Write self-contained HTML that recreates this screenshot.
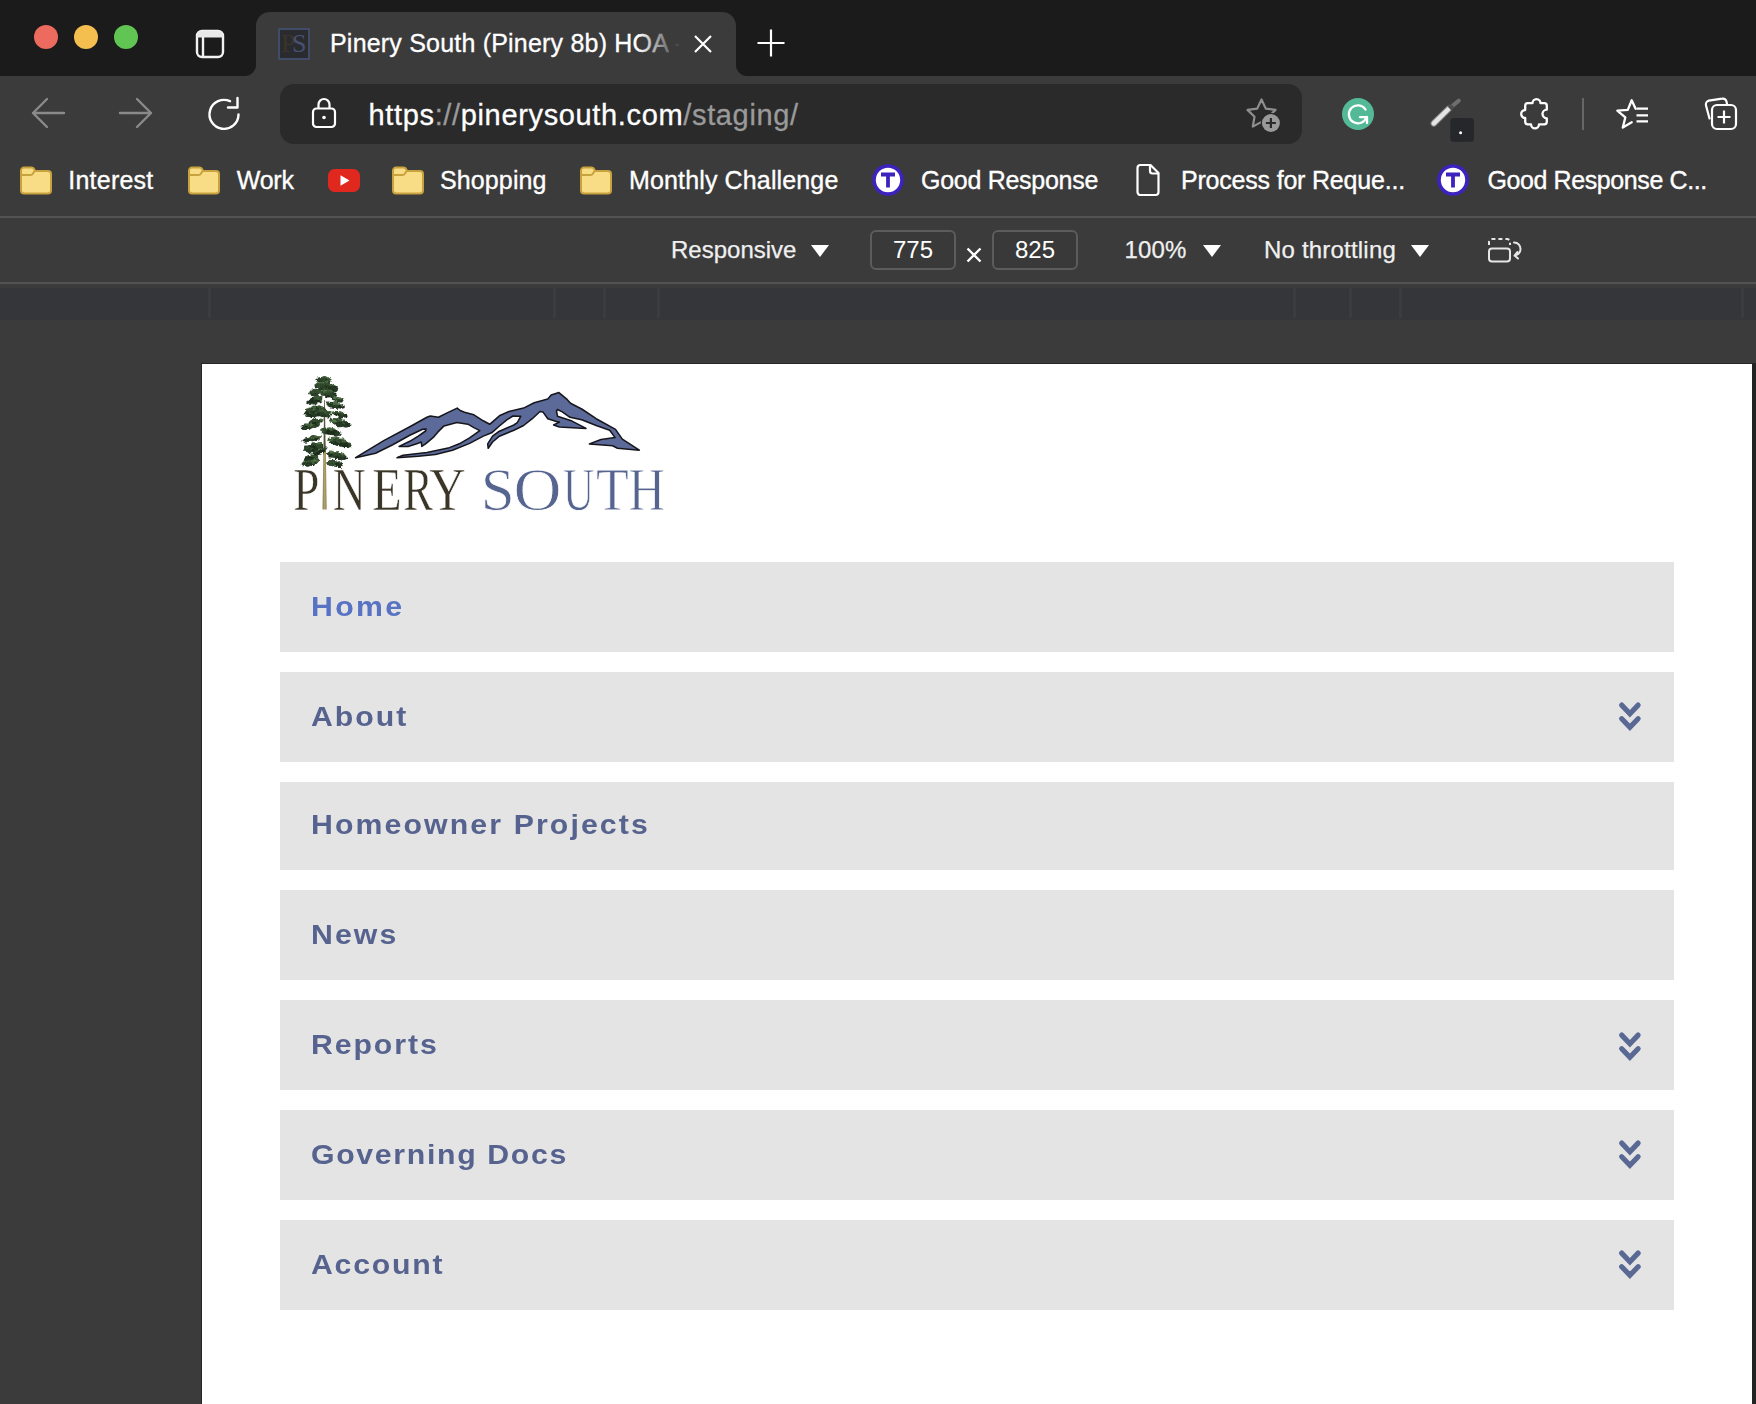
<!DOCTYPE html>
<html>
<head>
<meta charset="utf-8">
<title>Pinery South</title>
<style>
*{box-sizing:border-box;margin:0;padding:0}
html,body{width:1756px;height:1404px;overflow:hidden;background:#3b3b3b;font-family:"Liberation Sans",sans-serif;}
#root{position:relative;width:1756px;height:1404px;overflow:hidden;background:#3b3b3b;}
.abs{position:absolute}
.t{position:absolute;white-space:nowrap;line-height:1;color:#fff}
/* tab strip */
#tabstrip{left:0;top:0;width:1756px;height:76px;background:#1b1b1b}
#tab{left:256px;top:12px;width:481px;height:64px;background:#3b3b3b;border-radius:14px 14px 0 0}
.tl{position:absolute;width:24px;height:24px;border-radius:50%;top:25px}
/* toolbar */
#urlbar{left:280px;top:84px;width:1022px;height:60px;background:#2a2a2a;border-radius:14px}
/* lines */
.hl{position:absolute;left:0;width:1756px;height:2px;background:#525252}
#ruler{left:0;top:288px;width:1756px;height:32px;background:#34363a}
.tick{position:absolute;top:288px;width:3px;height:30px;background:#3b3c40}
/* page */
#page{left:202px;top:364px;width:1550px;height:1040px;background:#fff;box-shadow:0 0 0 1px #262626}
.mi{position:absolute;left:78px;width:1394px;height:90px;background:#e4e4e4}
.mi span{position:absolute;left:30.5px;top:30.8px;transform:scaleX(1.08);transform-origin:0 50%;font-weight:bold;font-size:28px;line-height:1;color:#57638f;letter-spacing:3px;white-space:nowrap}
.mi svg{position:absolute;left:1336.5px;top:29px}
.inp{position:absolute;top:230px;height:40px;border:2px solid #5c5c5c;border-radius:6px;background:#393939;color:#fff;font-size:24px;text-align:center;line-height:36px}
.tri{position:absolute;width:0;height:0;border-left:9px solid transparent;border-right:9px solid transparent;border-top:12px solid #fff;top:245px}
.bm{top:168px;font-size:25px;-webkit-text-stroke-width:0.35px}
#tabtitle,#url{-webkit-text-stroke-width:0.3px}
.dv{top:238px;font-size:24px;color:#f0f0f0;-webkit-text-stroke-width:0.25px}
</style>
</head>
<body>
<div id="root">
<!-- TABSTRIP -->
<div id="tabstrip" class="abs"></div>
<div class="tl" style="left:34px;background:#ed6a5e"></div>
<div class="tl" style="left:74px;background:#f5bf4f"></div>
<div class="tl" style="left:114px;background:#61c554"></div>

<!-- tab actions icon -->
<svg class="abs" style="left:194px;top:28px" width="32" height="32" viewBox="0 0 32 32"><rect x="3" y="3" width="26" height="26" rx="5" fill="none" stroke="#f2f2f2" stroke-width="2.4"/><path d="M3 9.5V8a5 5 0 0 1 5-5h16a5 5 0 0 1 5 5v1.5z" fill="#e8e8e8"/><path d="M9 9v20" stroke="#f2f2f2" stroke-width="2.4"/></svg>
<!-- tab shape -->
<svg class="abs" style="left:240px;top:12px" width="514" height="64" viewBox="0 0 514 64"><path d="M5 64 H507 C501 64 496 59 496 53 V14 C496 6 490 0 482 0 H30 C22 0 16 6 16 14 V53 C16 59 11 64 5 64Z" fill="#3b3b3b"/></svg>
<!-- favicon -->
<div class="abs" style="left:278px;top:28px;width:32px;height:32px;background:#2a2b2f;border:2px solid #414c69"></div>
<div class="t" style="left:281px;top:31px;font-family:'Liberation Serif',serif;font-size:26px;color:#3a352a;letter-spacing:-2px">P</div>
<div class="t" style="left:292px;top:31px;font-family:'Liberation Serif',serif;font-size:26px;color:#465170">S</div>
<div class="t" id="tabtitle" style="left:330px;top:31px;font-size:25px;letter-spacing:0.2px">Pinery South (Pinery 8b) HOA -</div>
<div class="abs" style="left:638px;top:20px;width:48px;height:48px;background:linear-gradient(90deg,rgba(59,59,59,0),#3b3b3b 88%)"></div>
<svg class="abs" style="left:692px;top:33px" width="22" height="22" viewBox="0 0 22 22"><path d="M3 3L19 19M19 3L3 19" stroke="#fff" stroke-width="2.2" fill="none"/></svg>
<svg class="abs" style="left:756px;top:28px" width="30" height="30" viewBox="0 0 30 30"><path d="M15 1.5V28.5M1.5 15H28.5" stroke="#fff" stroke-width="2.2" fill="none"/></svg>

<!-- TOOLBAR -->
<div id="urlbar" class="abs"></div>

<svg class="abs" style="left:30px;top:96px" width="36" height="34" viewBox="0 0 36 34"><path d="M17 3L3 17L17 31M3 17H34" stroke="#8a8a8a" stroke-width="2.4" fill="none" stroke-linecap="round" stroke-linejoin="round"/></svg>
<svg class="abs" style="left:118px;top:96px" width="36" height="34" viewBox="0 0 36 34"><path d="M19 3L33 17L19 31M33 17H2" stroke="#8a8a8a" stroke-width="2.4" fill="none" stroke-linecap="round" stroke-linejoin="round"/></svg>
<svg class="abs" style="left:206px;top:96px" width="36" height="36" viewBox="0 0 36 36"><path d="M32.5 18.5A14.5 14.5 0 1 1 24 5.2" stroke="#fff" stroke-width="2.4" fill="none" stroke-linecap="round"/><path d="M22 11.5H31.5V2" stroke="#fff" stroke-width="2.4" fill="none" stroke-linecap="round" stroke-linejoin="round"/></svg>
<!-- lock -->
<svg class="abs" style="left:310px;top:96px" width="28" height="34" viewBox="0 0 28 34"><rect x="3" y="12.5" width="22" height="18.5" rx="3.5" fill="none" stroke="#fff" stroke-width="2.2"/><path d="M8.5 12.5V8.5a5.5 5.5 0 0 1 11 0v4" fill="none" stroke="#fff" stroke-width="2.2"/><circle cx="14" cy="21.5" r="1.8" fill="#fff"/></svg>
<div class="t" id="url" style="left:368.5px;top:100.5px;font-size:29px;letter-spacing:0.65px"><span style="color:#fff">https</span><span style="color:#9a9a9a">://</span><span style="color:#fff">pinerysouth.com</span><span style="color:#9a9a9a">/staging/</span></div>
<!-- star plus -->
<svg class="abs" style="left:1244px;top:96px" width="40" height="38" viewBox="0 0 40 38"><path d="M17.5 3.5L21.8 12.6L31.5 13.9L24.5 20.8L26.2 30.6L17.5 25.9L8.8 30.6L10.5 20.8L3.5 13.9L13.2 12.6Z" fill="none" stroke="#8f8f8f" stroke-width="2.2" stroke-linejoin="round"/><circle cx="26.900" cy="27" r="10.300" fill="#2a2a2a"/><circle cx="26.900" cy="27" r="9" fill="#9a9a9a"/><path d="M26.900 22v10M21.900 27h10" stroke="#2a2a2a" stroke-width="2.200"/></svg>
<!-- grammarly -->
<div class="abs" style="left:1342px;top:98px;width:32px;height:32px;border-radius:50%;background:#54b996"></div>
<svg class="abs" style="left:1342px;top:98px" width="32" height="32" viewBox="0 0 32 32"><path d="M23.5 11.5A9 9 0 1 0 24.5 19" fill="none" stroke="#fff" stroke-width="2.300" stroke-linecap="round"/><path d="M18 19.2H25V25" fill="none" stroke="#fff" stroke-width="2.300" stroke-linecap="round" stroke-linejoin="round"/></svg>
<!-- pen -->
<svg class="abs" style="left:1430px;top:96px" width="48" height="48" viewBox="0 0 48 48"><path d="M17.500 14L28.800 4.600" stroke="#6e6e6e" stroke-width="4" stroke-linecap="round"/><path d="M3.800 27.400L18.500 13" stroke="#8a8a8a" stroke-width="6.400" stroke-linecap="round"/><path d="M3.800 27.400L18.500 13" stroke="#e4e4e4" stroke-width="4.400" stroke-linecap="round"/><path d="M19.500 12.500L22.500 9.500" stroke="#4d4d4d" stroke-width="5" /><rect x="20.300" y="22" width="23.700" height="23.700" rx="3.500" fill="#25272b"/><circle cx="30.600" cy="36.700" r="1.500" fill="#fff"/></svg>
<!-- puzzle -->
<svg class="abs" style="left:1516px;top:94px" width="40" height="40" viewBox="0 0 40 40"><path d="M11.700 9.200H16.500A4 4 0 0 1 24.500 9.200H28.300A2.500 2.500 0 0 1 30.800 11.700V15.700A4.300 4.300 0 0 0 30.800 24.300V27.800A2.500 2.500 0 0 1 28.300 30.300H23A4 4 0 0 1 15 30.300H11.700A2.500 2.500 0 0 1 9.200 27.800V24A3.900 3.900 0 0 1 9.200 16V11.700A2.500 2.500 0 0 1 11.700 9.200Z" fill="none" stroke="#fff" stroke-width="2.300" stroke-linejoin="round"/></svg>
<div class="abs" style="left:1582px;top:98px;width:2px;height:32px;background:#666"></div>
<!-- fav list -->
<svg class="abs" style="left:1612px;top:94px" width="40" height="40" viewBox="0 0 40 40"><path d="M19.700 28.300L10.800 33.600L13.300 23.400L5.300 16.700L15.800 15.900L19.700 6.200L23.600 14.700" fill="none" stroke="#fff" stroke-width="2.300" stroke-linejoin="round" stroke-linecap="round"/><path d="M24.500 14.700H36M24.500 21.300H36M24.500 27.300H36" stroke="#fff" stroke-width="2.300"/></svg>
<!-- collections -->
<svg class="abs" style="left:1702px;top:96px" width="38" height="36" viewBox="0 0 38 36"><path d="M7.500 22.500L4 9.500A4 4 0 0 1 6.800 4.600L20 2.700A4 4 0 0 1 24.500 5.500L25 8" fill="none" stroke="#fff" stroke-width="2.2" stroke-linecap="round"/><rect x="10" y="9" width="24" height="24" rx="5" fill="#3b3b3b" stroke="#fff" stroke-width="2.2"/><path d="M22 14.500v13M15.500 21h13" stroke="#fff" stroke-width="2.2"/></svg>
<!-- BOOKMARKS -->
<svg class="abs" style="left:19px;top:165px" width="34" height="30" viewBox="0 0 34 30"><path d="M2 5.500A3 3 0 0 1 5 2.500H12.500A3 3 0 0 1 15.200 4.200L16 6H29A3 3 0 0 1 32 9V25.500A3 3 0 0 1 29 28.500H5A3 3 0 0 1 2 25.500Z" fill="#f8dd86" stroke="#c8a23c" stroke-width="2"/><path d="M2.500 10H11.500A3 3 0 0 0 14.300 8L15.800 6" fill="none" stroke="#c8a23c" stroke-width="2"/></svg>
<div class="t bm" id="bm1" style="left:68.3px;letter-spacing:0.22px">Interest</div>
<svg class="abs" style="left:187px;top:165px" width="34" height="30" viewBox="0 0 34 30"><path d="M2 5.500A3 3 0 0 1 5 2.500H12.500A3 3 0 0 1 15.200 4.200L16 6H29A3 3 0 0 1 32 9V25.500A3 3 0 0 1 29 28.500H5A3 3 0 0 1 2 25.500Z" fill="#f8dd86" stroke="#c8a23c" stroke-width="2"/><path d="M2.500 10H11.500A3 3 0 0 0 14.300 8L15.800 6" fill="none" stroke="#c8a23c" stroke-width="2"/></svg>
<div class="t bm" id="bm2" style="left:236.8px;letter-spacing:-0.25px">Work</div>
<svg class="abs" style="left:328px;top:169px" width="32" height="23" viewBox="0 0 32 23"><rect x="0" y="0" width="32" height="23" rx="6.500" fill="#e0281e"/><path d="M12.500 6.200L21.500 11.500L12.500 16.800Z" fill="#fff"/></svg>
<svg class="abs" style="left:391px;top:165px" width="34" height="30" viewBox="0 0 34 30"><path d="M2 5.500A3 3 0 0 1 5 2.500H12.500A3 3 0 0 1 15.200 4.200L16 6H29A3 3 0 0 1 32 9V25.500A3 3 0 0 1 29 28.500H5A3 3 0 0 1 2 25.500Z" fill="#f8dd86" stroke="#c8a23c" stroke-width="2"/><path d="M2.500 10H11.500A3 3 0 0 0 14.300 8L15.800 6" fill="none" stroke="#c8a23c" stroke-width="2"/></svg>
<div class="t bm" id="bm3" style="left:440px;letter-spacing:0.12px">Shopping</div>
<svg class="abs" style="left:579px;top:165px" width="34" height="30" viewBox="0 0 34 30"><path d="M2 5.500A3 3 0 0 1 5 2.500H12.500A3 3 0 0 1 15.200 4.200L16 6H29A3 3 0 0 1 32 9V25.500A3 3 0 0 1 29 28.500H5A3 3 0 0 1 2 25.500Z" fill="#f8dd86" stroke="#c8a23c" stroke-width="2"/><path d="M2.500 10H11.500A3 3 0 0 0 14.300 8L15.800 6" fill="none" stroke="#c8a23c" stroke-width="2"/></svg>
<div class="t bm" id="bm4" style="left:629px;letter-spacing:0.14px">Monthly Challenge</div>
<svg class="abs" style="left:871px;top:163px" width="34" height="34" viewBox="0 0 34 34"><circle cx="17" cy="17" r="14" fill="#fff" stroke="#3d22c0" stroke-width="3.600"/><path d="M10 11.500H24M17 11.500V24.500" stroke="#3d22c0" stroke-width="3.800"/></svg>
<div class="t bm" id="bm5" style="left:921px;letter-spacing:-0.28px">Good Response</div>
<svg class="abs" style="left:1134px;top:162px" width="28" height="36" viewBox="0 0 28 36"><path d="M6.500 3H16.500L24.500 11V30A3 3 0 0 1 21.500 33H6.500A3 3 0 0 1 3.500 30V6A3 3 0 0 1 6.500 3Z" fill="none" stroke="#fff" stroke-width="2.2" stroke-linejoin="round"/><path d="M16 3.500V9A2.500 2.500 0 0 0 18.500 11.500H24" fill="none" stroke="#fff" stroke-width="2.2"/></svg>
<div class="t bm" id="bm6" style="left:1181px;letter-spacing:-0.2px">Process for Reque...</div>
<svg class="abs" style="left:1436px;top:163px" width="34" height="34" viewBox="0 0 34 34"><circle cx="17" cy="17" r="14" fill="#fff" stroke="#3d22c0" stroke-width="3.600"/><path d="M10 11.500H24M17 11.500V24.500" stroke="#3d22c0" stroke-width="3.800"/></svg>
<div class="t bm" id="bm7" style="left:1487.5px;letter-spacing:-0.4px">Good Response C...</div>

<!-- DEVTOOLS BAR -->
<div class="hl" style="top:216px"></div>
<div class="hl" style="top:282px"></div>

<div class="t dv" id="dv1" style="left:671px">Responsive</div>
<div class="tri" style="left:811px"></div>
<div class="inp" style="left:870px;width:86px">775</div>
<svg class="abs" style="left:965px;top:246px" width="18" height="18" viewBox="0 0 18 18"><path d="M2.500 2.500L15.500 15.500M15.500 2.500L2.500 15.500" stroke="#fff" stroke-width="2.400"/></svg>
<div class="inp" style="left:992px;width:86px">825</div>
<div class="t dv" id="dv2" style="left:1124.5px;letter-spacing:0.15px">100%</div>
<div class="tri" style="left:1203px"></div>
<div class="t dv" id="dv3" style="left:1264px;letter-spacing:0.2px">No throttling</div>
<div class="tri" style="left:1411px"></div>
<svg class="abs" style="left:1486px;top:236px" width="38" height="28" viewBox="0 0 38 28"><rect x="3" y="12.500" width="21" height="13" rx="3" fill="none" stroke="#e6e6e6" stroke-width="2"/><path d="M3 9V6A3 3 0 0 1 6 3H21A3 3 0 0 1 24 6V9" fill="none" stroke="#e6e6e6" stroke-width="2" stroke-dasharray="4 3"/><path d="M28 6.500C32.500 6.500 34.500 10 34.500 13C34.500 16.500 32 19 29 19.500M31.500 16L28.500 19.600L32 22.500" fill="none" stroke="#e6e6e6" stroke-width="2" stroke-linecap="round" stroke-linejoin="round"/></svg>
<div id="ruler" class="abs"></div><div class="tick" style="left:208px"></div><div class="tick" style="left:553px"></div><div class="tick" style="left:603px"></div><div class="tick" style="left:657px"></div><div class="tick" style="left:1293px"></div><div class="tick" style="left:1349px"></div><div class="tick" style="left:1399px"></div><div class="tick" style="left:1741px"></div>
<!-- PAGE -->
<div id="page" class="abs">
  <div class="mi" style="top:198px"><span style="color:#5872c4;letter-spacing:2.2px">Home</span></div>
  <div class="mi" style="top:308px"><span style="letter-spacing:1.85px">About</span><svg width="26" height="32" viewBox="0 0 26 32"><path d="M4.700 4.100L12.900 12.700L21.100 4.100M4.700 17.700L12.900 26.300L21.100 17.700" fill="none" stroke="#5a6894" stroke-width="5.200" stroke-linecap="round" stroke-linejoin="miter"/></svg></div>
  <div class="mi" style="top:418px;height:88px"><span style="letter-spacing:1.96px;top:29px">Homeowner Projects</span></div>
  <div class="mi" style="top:526px"><span style="letter-spacing:1.95px">News</span></div>
  <div class="mi" style="top:636px"><span style="letter-spacing:1.77px">Reports</span><svg style="top:31px" width="26" height="32" viewBox="0 0 26 32"><path d="M4.700 4.100L12.900 12.700L21.100 4.100M4.700 17.700L12.900 26.300L21.100 17.700" fill="none" stroke="#5a6894" stroke-width="5.200" stroke-linecap="round" stroke-linejoin="miter"/></svg></div>
  <div class="mi" style="top:746px"><span style="letter-spacing:1.55px">Governing Docs</span><svg width="26" height="32" viewBox="0 0 26 32"><path d="M4.700 4.100L12.900 12.700L21.100 4.100M4.700 17.700L12.900 26.300L21.100 17.700" fill="none" stroke="#5a6894" stroke-width="5.200" stroke-linecap="round" stroke-linejoin="miter"/></svg></div>
  <div class="mi" style="top:856px"><span style="letter-spacing:1.62px">Account</span><svg width="26" height="32" viewBox="0 0 26 32"><path d="M4.700 4.100L12.900 12.700L21.100 4.100M4.700 17.700L12.900 26.300L21.100 17.700" fill="none" stroke="#5a6894" stroke-width="5.200" stroke-linecap="round" stroke-linejoin="miter"/></svg></div>
</div>
<div id="rstrip" class="abs" style="left:1752px;top:363px;width:4px;height:1041px;background:#232323"></div>
<!-- LOGO -->
<svg class="abs" style="left:280px;top:366px" width="400" height="160" viewBox="280 366 400 160">
<defs>
<filter id="rough" x="-10%" y="-10%" width="120%" height="120%"><feTurbulence type="fractalNoise" baseFrequency="0.35" numOctaves="2" seed="3" result="n"/><feDisplacementMap in="SourceGraphic" in2="n" scale="3.2" xChannelSelector="R" yChannelSelector="G"/><feGaussianBlur stdDeviation="0.35"/></filter>
<linearGradient id="trunk" x1="0" x2="1" y1="0" y2="0"><stop offset="0" stop-color="#6d643c"/><stop offset="0.35" stop-color="#b3a56c"/><stop offset="0.75" stop-color="#a3955c"/><stop offset="1" stop-color="#7d7144"/></linearGradient>
</defs>
<!-- trunk -->
<path d="M324.2 400 L323.6 440 L323.2 455 L326 455 L325.5 440 L324.9 400Z" fill="#55553c"/>
<path d="M323.3 452 L322.6 509.6 L326.6 509.6 L325.9 452Z" fill="url(#trunk)"/>
<g filter="url(#rough)">
<ellipse cx="324.0" cy="380.2" rx="7.0" ry="3.4" fill="#2b4229" transform="rotate(0 324.0 380.2)"/>
<ellipse cx="328.2" cy="379.5" rx="1.2" ry="0.7" fill="#1c2b1b"/>
<ellipse cx="319.9" cy="379.8" rx="1.3" ry="0.7" fill="#263a25"/>
<ellipse cx="324.5" cy="381.3" rx="1.8" ry="1.0" fill="#3a5534"/>
<ellipse cx="327.8" cy="381.5" rx="2.4" ry="1.4" fill="#344d2f"/>
<ellipse cx="329.3" cy="379.3" rx="2.0" ry="1.2" fill="#344d2f"/>
<ellipse cx="320.1" cy="379.2" rx="2.6" ry="1.5" fill="#344d2f"/>
<ellipse cx="321.6" cy="379.8" rx="1.8" ry="1.0" fill="#263a25"/>
<ellipse cx="326.9" cy="381.6" rx="2.3" ry="1.3" fill="#263a25"/>
<ellipse cx="328.2" cy="381.9" rx="1.4" ry="0.8" fill="#20321f"/>
<ellipse cx="322.3" cy="380.0" rx="1.3" ry="0.7" fill="#3a5534"/>
<ellipse cx="318.9" cy="380.3" rx="2.3" ry="1.3" fill="#20321f"/>
<ellipse cx="320.0" cy="379.0" rx="1.6" ry="0.9" fill="#57754c"/>
<ellipse cx="322.9" cy="378.6" rx="2.0" ry="1.1" fill="#3a5534"/>
<ellipse cx="319.9" cy="380.3" rx="1.8" ry="1.0" fill="#263a25"/>
<ellipse cx="326.4" cy="380.1" rx="1.8" ry="1.0" fill="#1c2b1b"/>
<ellipse cx="320.3" cy="383.2" rx="1.8" ry="1.0" fill="#20321f"/>
<ellipse cx="324.5" cy="377.5" rx="2.4" ry="1.4" fill="#45623c"/>
<ellipse cx="321.8" cy="382.1" rx="1.9" ry="1.1" fill="#1c2b1b"/>
<ellipse cx="325.9" cy="380.7" rx="1.6" ry="0.9" fill="#2b4229"/>
<ellipse cx="323.1" cy="379.5" rx="2.2" ry="1.3" fill="#2b4229"/>
<ellipse cx="318.9" cy="378.8" rx="1.8" ry="1.0" fill="#2f472b"/>
<ellipse cx="319.7" cy="382.2" rx="1.2" ry="0.7" fill="#1c2b1b"/>
<ellipse cx="320.6" cy="382.5" rx="1.9" ry="1.1" fill="#263a25"/>
<ellipse cx="324.3" cy="379.0" rx="1.5" ry="0.9" fill="#344d2f"/>
<ellipse cx="328.3" cy="379.0" rx="1.4" ry="0.8" fill="#344d2f"/>
<ellipse cx="317.7" cy="379.2" rx="2.3" ry="1.4" fill="#1c2b1b"/>
<ellipse cx="318.4" cy="379.3" rx="2.6" ry="1.5" fill="#2b4229"/>
<ellipse cx="329.1" cy="377.9" rx="1.4" ry="0.8" fill="#57754c"/>
<ellipse cx="327.3" cy="382.6" rx="1.2" ry="0.7" fill="#263a25"/>
<ellipse cx="324.0" cy="380.5" rx="1.8" ry="1.0" fill="#2f472b"/>
<ellipse cx="325.0" cy="386.0" rx="6.0" ry="4.8" fill="#2b4229" transform="rotate(0 325.0 386.0)"/>
<ellipse cx="329.8" cy="384.8" rx="1.9" ry="1.1" fill="#263a25"/>
<ellipse cx="322.1" cy="382.4" rx="1.8" ry="1.1" fill="#2f472b"/>
<ellipse cx="326.1" cy="382.9" rx="1.7" ry="1.0" fill="#4c6a42"/>
<ellipse cx="321.2" cy="386.4" rx="1.4" ry="0.8" fill="#3a5534"/>
<ellipse cx="323.1" cy="386.6" rx="2.0" ry="1.2" fill="#344d2f"/>
<ellipse cx="327.3" cy="386.0" rx="1.3" ry="0.8" fill="#2f472b"/>
<ellipse cx="323.8" cy="385.1" rx="1.5" ry="0.8" fill="#20321f"/>
<ellipse cx="326.8" cy="388.1" rx="1.7" ry="1.0" fill="#2b4229"/>
<ellipse cx="323.0" cy="386.3" rx="1.9" ry="1.1" fill="#20321f"/>
<ellipse cx="321.7" cy="386.3" rx="1.4" ry="0.8" fill="#2b4229"/>
<ellipse cx="323.3" cy="388.2" rx="2.4" ry="1.4" fill="#263a25"/>
<ellipse cx="322.3" cy="385.8" rx="2.5" ry="1.5" fill="#2f472b"/>
<ellipse cx="327.7" cy="389.0" rx="1.2" ry="0.7" fill="#2b4229"/>
<ellipse cx="330.5" cy="385.4" rx="2.2" ry="1.2" fill="#2f472b"/>
<ellipse cx="319.3" cy="385.4" rx="1.7" ry="1.0" fill="#3a5534"/>
<ellipse cx="319.8" cy="385.1" rx="1.6" ry="0.9" fill="#3a5534"/>
<ellipse cx="321.0" cy="383.0" rx="2.3" ry="1.3" fill="#57754c"/>
<ellipse cx="326.9" cy="381.7" rx="2.2" ry="1.3" fill="#57754c"/>
<ellipse cx="326.3" cy="389.4" rx="2.2" ry="1.3" fill="#20321f"/>
<ellipse cx="326.0" cy="382.6" rx="1.4" ry="0.8" fill="#3a5534"/>
<ellipse cx="328.9" cy="385.1" rx="2.5" ry="1.4" fill="#2f472b"/>
<ellipse cx="328.5" cy="385.1" rx="1.5" ry="0.9" fill="#3a5534"/>
<ellipse cx="321.6" cy="386.6" rx="1.9" ry="1.1" fill="#263a25"/>
<ellipse cx="327.2" cy="383.0" rx="2.1" ry="1.2" fill="#2f472b"/>
<ellipse cx="329.2" cy="388.1" rx="2.5" ry="1.4" fill="#263a25"/>
<ellipse cx="322.5" cy="386.3" rx="2.3" ry="1.3" fill="#2f472b"/>
<ellipse cx="330.0" cy="388.6" rx="2.2" ry="1.3" fill="#1c2b1b"/>
<ellipse cx="320.2" cy="388.9" rx="2.2" ry="1.3" fill="#263a25"/>
<ellipse cx="326.0" cy="386.0" rx="2.0" ry="1.2" fill="#20321f"/>
<ellipse cx="325.8" cy="384.2" rx="2.4" ry="1.4" fill="#344d2f"/>
<ellipse cx="323.0" cy="383.5" rx="2.0" ry="1.1" fill="#57754c"/>
<ellipse cx="330.3" cy="386.6" rx="2.2" ry="1.3" fill="#344d2f"/>
<ellipse cx="319.3" cy="385.2" rx="1.8" ry="1.0" fill="#1c2b1b"/>
<ellipse cx="326.9" cy="390.5" rx="1.2" ry="0.7" fill="#263a25"/>
<ellipse cx="324.2" cy="388.4" rx="2.0" ry="1.2" fill="#2b4229"/>
<ellipse cx="319.7" cy="384.7" rx="1.3" ry="0.7" fill="#2b4229"/>
<ellipse cx="318.7" cy="385.5" rx="3.7" ry="2.2" fill="#2b4229" transform="rotate(-14 318.7 385.5)"/>
<ellipse cx="320.8" cy="383.8" rx="2.3" ry="1.3" fill="#3a5534"/>
<ellipse cx="315.9" cy="387.3" rx="1.9" ry="1.1" fill="#263a25"/>
<ellipse cx="318.2" cy="385.6" rx="1.8" ry="1.0" fill="#3a5534"/>
<ellipse cx="315.9" cy="384.9" rx="1.4" ry="0.8" fill="#3a5534"/>
<ellipse cx="315.8" cy="386.6" rx="2.0" ry="1.1" fill="#2b4229"/>
<ellipse cx="317.3" cy="384.3" rx="1.9" ry="1.1" fill="#4c6a42"/>
<ellipse cx="319.2" cy="385.0" rx="1.4" ry="0.8" fill="#344d2f"/>
<ellipse cx="318.7" cy="383.8" rx="2.0" ry="1.1" fill="#4c6a42"/>
<ellipse cx="316.2" cy="386.8" rx="1.9" ry="1.1" fill="#263a25"/>
<ellipse cx="317.5" cy="384.3" rx="1.9" ry="1.1" fill="#344d2f"/>
<ellipse cx="316.9" cy="385.9" rx="1.9" ry="1.1" fill="#2f472b"/>
<ellipse cx="321.5" cy="383.8" rx="1.5" ry="0.8" fill="#344d2f"/>
<ellipse cx="332.5" cy="387.6" rx="4.8" ry="3.0" fill="#263a25" transform="rotate(14 332.5 387.6)"/>
<ellipse cx="329.8" cy="388.0" rx="1.6" ry="0.9" fill="#2b4229"/>
<ellipse cx="332.4" cy="388.5" rx="2.1" ry="1.2" fill="#1c2b1b"/>
<ellipse cx="335.1" cy="390.3" rx="2.5" ry="1.5" fill="#2b4229"/>
<ellipse cx="334.7" cy="390.6" rx="2.6" ry="1.5" fill="#263a25"/>
<ellipse cx="332.8" cy="386.7" rx="2.4" ry="1.4" fill="#57754c"/>
<ellipse cx="336.9" cy="388.5" rx="1.4" ry="0.8" fill="#20321f"/>
<ellipse cx="335.6" cy="388.3" rx="1.8" ry="1.0" fill="#2f472b"/>
<ellipse cx="330.3" cy="389.6" rx="1.2" ry="0.7" fill="#1c2b1b"/>
<ellipse cx="331.9" cy="387.7" rx="1.6" ry="0.9" fill="#263a25"/>
<ellipse cx="330.5" cy="390.2" rx="1.3" ry="0.8" fill="#263a25"/>
<ellipse cx="334.1" cy="387.8" rx="1.5" ry="0.9" fill="#344d2f"/>
<ellipse cx="334.4" cy="387.3" rx="2.3" ry="1.3" fill="#1c2b1b"/>
<ellipse cx="328.2" cy="388.0" rx="2.3" ry="1.4" fill="#2f472b"/>
<ellipse cx="329.4" cy="388.2" rx="1.9" ry="1.1" fill="#20321f"/>
<ellipse cx="332.3" cy="386.7" rx="1.3" ry="0.7" fill="#2f472b"/>
<ellipse cx="333.7" cy="390.8" rx="1.6" ry="0.9" fill="#20321f"/>
<ellipse cx="330.3" cy="384.9" rx="1.3" ry="0.7" fill="#57754c"/>
<ellipse cx="336.3" cy="389.8" rx="1.8" ry="1.0" fill="#2b4229"/>
<ellipse cx="335.6" cy="388.3" rx="2.5" ry="1.4" fill="#263a25"/>
<ellipse cx="334.5" cy="389.9" rx="1.5" ry="0.9" fill="#20321f"/>
<ellipse cx="315.6" cy="392.1" rx="5.7" ry="2.8" fill="#263a25" transform="rotate(-14 315.6 392.1)"/>
<ellipse cx="315.8" cy="393.4" rx="2.5" ry="1.4" fill="#2b4229"/>
<ellipse cx="313.1" cy="392.5" rx="1.8" ry="1.0" fill="#2b4229"/>
<ellipse cx="317.4" cy="393.3" rx="1.2" ry="0.7" fill="#2b4229"/>
<ellipse cx="316.4" cy="392.1" rx="1.9" ry="1.1" fill="#3a5534"/>
<ellipse cx="312.9" cy="392.7" rx="1.8" ry="1.0" fill="#2b4229"/>
<ellipse cx="316.7" cy="390.1" rx="1.9" ry="1.1" fill="#344d2f"/>
<ellipse cx="318.6" cy="391.1" rx="1.5" ry="0.9" fill="#57754c"/>
<ellipse cx="313.4" cy="395.0" rx="2.2" ry="1.3" fill="#263a25"/>
<ellipse cx="313.2" cy="393.8" rx="1.2" ry="0.7" fill="#263a25"/>
<ellipse cx="320.0" cy="391.3" rx="2.4" ry="1.4" fill="#344d2f"/>
<ellipse cx="316.7" cy="392.7" rx="2.4" ry="1.4" fill="#1c2b1b"/>
<ellipse cx="310.2" cy="393.4" rx="2.0" ry="1.2" fill="#2b4229"/>
<ellipse cx="318.0" cy="391.9" rx="1.6" ry="0.9" fill="#344d2f"/>
<ellipse cx="315.9" cy="395.0" rx="2.6" ry="1.5" fill="#2b4229"/>
<ellipse cx="316.5" cy="394.9" rx="1.6" ry="0.9" fill="#2b4229"/>
<ellipse cx="317.3" cy="393.3" rx="1.3" ry="0.7" fill="#2b4229"/>
<ellipse cx="313.2" cy="392.7" rx="1.9" ry="1.1" fill="#344d2f"/>
<ellipse cx="320.2" cy="392.5" rx="1.4" ry="0.8" fill="#263a25"/>
<ellipse cx="316.5" cy="392.1" rx="1.6" ry="0.9" fill="#3a5534"/>
<ellipse cx="320.6" cy="392.4" rx="2.4" ry="1.4" fill="#3a5534"/>
<ellipse cx="312.6" cy="390.8" rx="2.4" ry="1.4" fill="#344d2f"/>
<ellipse cx="328.8" cy="393.8" rx="7.5" ry="3.2" fill="#2b4229" transform="rotate(14 328.8 393.8)"/>
<ellipse cx="328.4" cy="391.3" rx="1.6" ry="0.9" fill="#3a5534"/>
<ellipse cx="328.0" cy="393.0" rx="2.4" ry="1.4" fill="#263a25"/>
<ellipse cx="325.0" cy="390.7" rx="2.3" ry="1.3" fill="#57754c"/>
<ellipse cx="334.5" cy="393.6" rx="2.0" ry="1.1" fill="#1c2b1b"/>
<ellipse cx="331.7" cy="391.5" rx="2.0" ry="1.2" fill="#2f472b"/>
<ellipse cx="326.9" cy="390.7" rx="1.5" ry="0.9" fill="#4c6a42"/>
<ellipse cx="334.2" cy="395.9" rx="2.5" ry="1.5" fill="#1c2b1b"/>
<ellipse cx="332.1" cy="392.4" rx="2.1" ry="1.2" fill="#2f472b"/>
<ellipse cx="325.4" cy="392.6" rx="1.5" ry="0.9" fill="#344d2f"/>
<ellipse cx="331.3" cy="391.5" rx="1.9" ry="1.1" fill="#3a5534"/>
<ellipse cx="332.9" cy="396.2" rx="2.2" ry="1.3" fill="#1c2b1b"/>
<ellipse cx="328.5" cy="394.7" rx="1.5" ry="0.9" fill="#2b4229"/>
<ellipse cx="329.3" cy="392.3" rx="2.1" ry="1.2" fill="#344d2f"/>
<ellipse cx="324.3" cy="392.8" rx="1.9" ry="1.1" fill="#2f472b"/>
<ellipse cx="328.3" cy="394.4" rx="2.1" ry="1.2" fill="#3a5534"/>
<ellipse cx="331.1" cy="395.0" rx="1.5" ry="0.9" fill="#2b4229"/>
<ellipse cx="327.1" cy="392.5" rx="1.9" ry="1.1" fill="#344d2f"/>
<ellipse cx="327.4" cy="396.3" rx="2.2" ry="1.2" fill="#1c2b1b"/>
<ellipse cx="326.9" cy="395.8" rx="1.8" ry="1.1" fill="#1c2b1b"/>
<ellipse cx="330.4" cy="390.7" rx="2.0" ry="1.1" fill="#45623c"/>
<ellipse cx="335.9" cy="395.1" rx="1.2" ry="0.7" fill="#1c2b1b"/>
<ellipse cx="333.1" cy="396.0" rx="2.6" ry="1.5" fill="#2b4229"/>
<ellipse cx="323.0" cy="394.5" rx="2.5" ry="1.4" fill="#344d2f"/>
<ellipse cx="326.6" cy="392.6" rx="1.9" ry="1.1" fill="#45623c"/>
<ellipse cx="332.7" cy="397.1" rx="1.9" ry="1.1" fill="#20321f"/>
<ellipse cx="328.2" cy="392.0" rx="2.5" ry="1.4" fill="#344d2f"/>
<ellipse cx="326.3" cy="394.0" rx="2.5" ry="1.5" fill="#2b4229"/>
<ellipse cx="324.9" cy="393.4" rx="1.4" ry="0.8" fill="#2f472b"/>
<ellipse cx="326.8" cy="394.2" rx="1.6" ry="0.9" fill="#2f472b"/>
<ellipse cx="329.6" cy="390.8" rx="1.3" ry="0.8" fill="#57754c"/>
<ellipse cx="328.0" cy="390.4" rx="1.6" ry="0.9" fill="#45623c"/>
<ellipse cx="314.9" cy="400.2" rx="7.5" ry="3.2" fill="#20321f" transform="rotate(-14 314.9 400.2)"/>
<ellipse cx="309.7" cy="403.7" rx="2.0" ry="1.2" fill="#2b4229"/>
<ellipse cx="320.2" cy="397.5" rx="2.4" ry="1.4" fill="#45623c"/>
<ellipse cx="320.7" cy="400.7" rx="1.6" ry="0.9" fill="#3a5534"/>
<ellipse cx="315.3" cy="401.9" rx="1.9" ry="1.1" fill="#263a25"/>
<ellipse cx="315.1" cy="397.1" rx="1.8" ry="1.0" fill="#4c6a42"/>
<ellipse cx="316.5" cy="397.2" rx="2.5" ry="1.4" fill="#3a5534"/>
<ellipse cx="308.8" cy="400.8" rx="1.2" ry="0.7" fill="#2b4229"/>
<ellipse cx="310.4" cy="402.8" rx="1.4" ry="0.8" fill="#2b4229"/>
<ellipse cx="308.1" cy="402.2" rx="2.0" ry="1.1" fill="#263a25"/>
<ellipse cx="310.8" cy="401.6" rx="1.6" ry="0.9" fill="#2b4229"/>
<ellipse cx="312.2" cy="401.8" rx="1.9" ry="1.1" fill="#1c2b1b"/>
<ellipse cx="319.6" cy="400.9" rx="1.3" ry="0.7" fill="#263a25"/>
<ellipse cx="318.8" cy="397.8" rx="1.5" ry="0.9" fill="#45623c"/>
<ellipse cx="319.8" cy="398.9" rx="1.4" ry="0.8" fill="#57754c"/>
<ellipse cx="315.4" cy="401.5" rx="2.0" ry="1.1" fill="#2b4229"/>
<ellipse cx="315.6" cy="401.8" rx="2.0" ry="1.1" fill="#20321f"/>
<ellipse cx="314.4" cy="398.1" rx="1.8" ry="1.0" fill="#3a5534"/>
<ellipse cx="316.3" cy="401.6" rx="2.2" ry="1.3" fill="#1c2b1b"/>
<ellipse cx="314.5" cy="403.7" rx="1.3" ry="0.8" fill="#263a25"/>
<ellipse cx="321.1" cy="400.5" rx="1.7" ry="1.0" fill="#2b4229"/>
<ellipse cx="308.5" cy="402.9" rx="2.4" ry="1.4" fill="#20321f"/>
<ellipse cx="318.6" cy="400.9" rx="2.3" ry="1.3" fill="#1c2b1b"/>
<ellipse cx="309.5" cy="402.0" rx="1.2" ry="0.7" fill="#1c2b1b"/>
<ellipse cx="320.9" cy="397.3" rx="1.9" ry="1.1" fill="#344d2f"/>
<ellipse cx="318.4" cy="399.0" rx="1.3" ry="0.8" fill="#57754c"/>
<ellipse cx="319.7" cy="401.8" rx="1.3" ry="0.8" fill="#1c2b1b"/>
<ellipse cx="320.8" cy="400.3" rx="1.2" ry="0.7" fill="#3a5534"/>
<ellipse cx="316.4" cy="403.2" rx="2.1" ry="1.2" fill="#2b4229"/>
<ellipse cx="320.3" cy="398.2" rx="1.9" ry="1.1" fill="#344d2f"/>
<ellipse cx="313.9" cy="399.3" rx="1.3" ry="0.7" fill="#263a25"/>
<ellipse cx="317.8" cy="399.0" rx="1.5" ry="0.9" fill="#3a5534"/>
<ellipse cx="337.6" cy="399.6" rx="5.6" ry="1.9" fill="#20321f" transform="rotate(14 337.6 399.6)"/>
<ellipse cx="340.6" cy="400.4" rx="1.8" ry="1.1" fill="#2b4229"/>
<ellipse cx="334.8" cy="397.3" rx="1.8" ry="1.1" fill="#57754c"/>
<ellipse cx="336.7" cy="399.3" rx="1.8" ry="1.0" fill="#2b4229"/>
<ellipse cx="337.2" cy="399.8" rx="1.9" ry="1.1" fill="#2b4229"/>
<ellipse cx="336.8" cy="398.9" rx="1.5" ry="0.9" fill="#344d2f"/>
<ellipse cx="340.0" cy="399.7" rx="1.2" ry="0.7" fill="#2f472b"/>
<ellipse cx="337.2" cy="398.3" rx="1.7" ry="1.0" fill="#4c6a42"/>
<ellipse cx="339.4" cy="398.3" rx="1.9" ry="1.1" fill="#57754c"/>
<ellipse cx="335.2" cy="399.0" rx="2.3" ry="1.3" fill="#3a5534"/>
<ellipse cx="337.7" cy="400.6" rx="2.3" ry="1.3" fill="#2b4229"/>
<ellipse cx="340.7" cy="401.4" rx="2.0" ry="1.2" fill="#263a25"/>
<ellipse cx="332.4" cy="398.5" rx="1.3" ry="0.7" fill="#3a5534"/>
<ellipse cx="339.4" cy="401.1" rx="1.5" ry="0.9" fill="#263a25"/>
<ellipse cx="333.4" cy="399.5" rx="1.4" ry="0.8" fill="#20321f"/>
<ellipse cx="342.0" cy="399.5" rx="2.2" ry="1.3" fill="#344d2f"/>
<ellipse cx="340.6" cy="399.8" rx="1.4" ry="0.8" fill="#263a25"/>
<ellipse cx="334.7" cy="405.2" rx="9.1" ry="2.6" fill="#1c2b1b" transform="rotate(14 334.7 405.2)"/>
<ellipse cx="341.6" cy="407.4" rx="1.7" ry="1.0" fill="#2b4229"/>
<ellipse cx="340.6" cy="406.5" rx="1.3" ry="0.8" fill="#20321f"/>
<ellipse cx="333.3" cy="406.6" rx="2.5" ry="1.5" fill="#20321f"/>
<ellipse cx="327.8" cy="402.6" rx="1.7" ry="1.0" fill="#45623c"/>
<ellipse cx="337.6" cy="404.3" rx="1.2" ry="0.7" fill="#344d2f"/>
<ellipse cx="336.4" cy="407.7" rx="1.8" ry="1.0" fill="#2b4229"/>
<ellipse cx="328.7" cy="405.8" rx="1.2" ry="0.7" fill="#20321f"/>
<ellipse cx="334.3" cy="407.4" rx="1.7" ry="1.0" fill="#1c2b1b"/>
<ellipse cx="336.8" cy="405.9" rx="2.5" ry="1.4" fill="#2f472b"/>
<ellipse cx="335.3" cy="406.1" rx="2.0" ry="1.2" fill="#2f472b"/>
<ellipse cx="332.8" cy="407.5" rx="2.1" ry="1.2" fill="#2b4229"/>
<ellipse cx="335.1" cy="403.0" rx="2.5" ry="1.4" fill="#45623c"/>
<ellipse cx="342.4" cy="407.2" rx="2.5" ry="1.4" fill="#20321f"/>
<ellipse cx="338.9" cy="406.5" rx="1.8" ry="1.1" fill="#1c2b1b"/>
<ellipse cx="340.1" cy="406.1" rx="1.5" ry="0.9" fill="#20321f"/>
<ellipse cx="336.2" cy="404.7" rx="1.9" ry="1.1" fill="#344d2f"/>
<ellipse cx="337.7" cy="403.7" rx="2.3" ry="1.4" fill="#57754c"/>
<ellipse cx="331.0" cy="403.3" rx="1.6" ry="0.9" fill="#45623c"/>
<ellipse cx="336.6" cy="403.6" rx="1.9" ry="1.1" fill="#344d2f"/>
<ellipse cx="335.1" cy="403.9" rx="1.3" ry="0.7" fill="#4c6a42"/>
<ellipse cx="328.2" cy="403.9" rx="1.4" ry="0.8" fill="#344d2f"/>
<ellipse cx="341.7" cy="405.1" rx="1.5" ry="0.9" fill="#344d2f"/>
<ellipse cx="335.8" cy="407.3" rx="2.6" ry="1.5" fill="#1c2b1b"/>
<ellipse cx="336.0" cy="406.5" rx="1.8" ry="1.1" fill="#263a25"/>
<ellipse cx="335.2" cy="402.8" rx="2.1" ry="1.2" fill="#4c6a42"/>
<ellipse cx="335.9" cy="404.0" rx="1.6" ry="0.9" fill="#45623c"/>
<ellipse cx="329.0" cy="405.6" rx="1.5" ry="0.8" fill="#3a5534"/>
<ellipse cx="336.1" cy="406.9" rx="1.6" ry="0.9" fill="#263a25"/>
<ellipse cx="331.8" cy="406.1" rx="2.6" ry="1.5" fill="#263a25"/>
<ellipse cx="327.8" cy="403.1" rx="1.3" ry="0.8" fill="#344d2f"/>
<ellipse cx="314.9" cy="411.7" rx="10.7" ry="5.1" fill="#20321f" transform="rotate(-14 314.9 411.7)"/>
<ellipse cx="321.2" cy="412.5" rx="2.3" ry="1.4" fill="#1c2b1b"/>
<ellipse cx="309.1" cy="414.2" rx="2.4" ry="1.4" fill="#263a25"/>
<ellipse cx="318.6" cy="412.4" rx="2.6" ry="1.5" fill="#263a25"/>
<ellipse cx="316.2" cy="412.8" rx="1.9" ry="1.1" fill="#3a5534"/>
<ellipse cx="310.1" cy="413.8" rx="2.3" ry="1.3" fill="#20321f"/>
<ellipse cx="321.8" cy="412.6" rx="2.1" ry="1.2" fill="#3a5534"/>
<ellipse cx="321.0" cy="410.9" rx="1.2" ry="0.7" fill="#2f472b"/>
<ellipse cx="323.8" cy="410.6" rx="2.5" ry="1.4" fill="#1c2b1b"/>
<ellipse cx="320.9" cy="410.4" rx="2.1" ry="1.2" fill="#3a5534"/>
<ellipse cx="312.5" cy="411.2" rx="1.2" ry="0.7" fill="#20321f"/>
<ellipse cx="312.3" cy="411.9" rx="1.3" ry="0.8" fill="#20321f"/>
<ellipse cx="312.4" cy="410.4" rx="1.9" ry="1.1" fill="#2b4229"/>
<ellipse cx="320.3" cy="414.4" rx="1.8" ry="1.0" fill="#2b4229"/>
<ellipse cx="310.8" cy="409.6" rx="1.2" ry="0.7" fill="#2f472b"/>
<ellipse cx="308.9" cy="411.8" rx="1.8" ry="1.0" fill="#1c2b1b"/>
<ellipse cx="314.7" cy="406.8" rx="2.1" ry="1.2" fill="#344d2f"/>
<ellipse cx="313.7" cy="409.5" rx="1.2" ry="0.7" fill="#57754c"/>
<ellipse cx="307.1" cy="416.0" rx="1.8" ry="1.0" fill="#2b4229"/>
<ellipse cx="311.0" cy="413.2" rx="1.2" ry="0.7" fill="#263a25"/>
<ellipse cx="321.7" cy="413.9" rx="1.7" ry="1.0" fill="#2b4229"/>
<ellipse cx="314.0" cy="409.6" rx="1.7" ry="1.0" fill="#57754c"/>
<ellipse cx="304.8" cy="413.5" rx="1.3" ry="0.8" fill="#20321f"/>
<ellipse cx="313.9" cy="407.0" rx="2.3" ry="1.3" fill="#45623c"/>
<ellipse cx="322.9" cy="413.6" rx="2.6" ry="1.5" fill="#20321f"/>
<ellipse cx="312.7" cy="416.3" rx="2.1" ry="1.2" fill="#20321f"/>
<ellipse cx="321.1" cy="407.7" rx="2.3" ry="1.4" fill="#57754c"/>
<ellipse cx="307.9" cy="409.5" rx="2.1" ry="1.2" fill="#3a5534"/>
<ellipse cx="319.3" cy="406.4" rx="1.4" ry="0.8" fill="#57754c"/>
<ellipse cx="324.9" cy="410.6" rx="1.4" ry="0.8" fill="#2f472b"/>
<ellipse cx="319.1" cy="412.6" rx="2.2" ry="1.3" fill="#3a5534"/>
<ellipse cx="322.7" cy="410.8" rx="2.3" ry="1.3" fill="#344d2f"/>
<ellipse cx="311.3" cy="409.8" rx="1.7" ry="1.0" fill="#344d2f"/>
<ellipse cx="306.8" cy="412.4" rx="1.6" ry="0.9" fill="#20321f"/>
<ellipse cx="313.7" cy="414.6" rx="1.7" ry="1.0" fill="#2b4229"/>
<ellipse cx="308.7" cy="414.5" rx="1.2" ry="0.7" fill="#1c2b1b"/>
<ellipse cx="308.3" cy="414.2" rx="2.1" ry="1.2" fill="#1c2b1b"/>
<ellipse cx="318.7" cy="406.4" rx="1.7" ry="1.0" fill="#4c6a42"/>
<ellipse cx="320.2" cy="413.0" rx="1.3" ry="0.8" fill="#20321f"/>
<ellipse cx="306.5" cy="413.7" rx="1.2" ry="0.7" fill="#263a25"/>
<ellipse cx="323.2" cy="412.0" rx="2.3" ry="1.3" fill="#263a25"/>
<ellipse cx="323.3" cy="411.9" rx="2.4" ry="1.4" fill="#2b4229"/>
<ellipse cx="318.4" cy="410.2" rx="2.4" ry="1.4" fill="#263a25"/>
<ellipse cx="312.7" cy="407.2" rx="1.4" ry="0.8" fill="#344d2f"/>
<ellipse cx="313.8" cy="416.9" rx="2.3" ry="1.3" fill="#263a25"/>
<ellipse cx="320.8" cy="411.5" rx="2.3" ry="1.3" fill="#3a5534"/>
<ellipse cx="312.2" cy="416.3" rx="2.5" ry="1.4" fill="#1c2b1b"/>
<ellipse cx="320.2" cy="413.5" rx="2.5" ry="1.4" fill="#3a5534"/>
<ellipse cx="307.5" cy="411.1" rx="1.5" ry="0.9" fill="#2f472b"/>
<ellipse cx="319.3" cy="411.1" rx="1.4" ry="0.8" fill="#2f472b"/>
<ellipse cx="309.6" cy="408.2" rx="1.4" ry="0.8" fill="#45623c"/>
<ellipse cx="321.2" cy="412.8" rx="2.1" ry="1.2" fill="#2f472b"/>
<ellipse cx="321.5" cy="409.2" rx="1.9" ry="1.1" fill="#2f472b"/>
<ellipse cx="317.1" cy="409.9" rx="2.6" ry="1.5" fill="#2f472b"/>
<ellipse cx="319.6" cy="406.8" rx="1.7" ry="1.0" fill="#344d2f"/>
<ellipse cx="322.7" cy="409.5" rx="1.7" ry="1.0" fill="#4c6a42"/>
<ellipse cx="311.0" cy="413.5" rx="2.2" ry="1.3" fill="#344d2f"/>
<ellipse cx="313.7" cy="415.9" rx="1.6" ry="0.9" fill="#2b4229"/>
<ellipse cx="312.8" cy="407.4" rx="1.5" ry="0.9" fill="#45623c"/>
<ellipse cx="309.2" cy="410.7" rx="1.9" ry="1.1" fill="#344d2f"/>
<ellipse cx="318.7" cy="412.7" rx="2.1" ry="1.2" fill="#344d2f"/>
<ellipse cx="322.6" cy="411.2" rx="1.6" ry="0.9" fill="#263a25"/>
<ellipse cx="312.3" cy="414.4" rx="2.0" ry="1.2" fill="#263a25"/>
<ellipse cx="318.2" cy="415.1" rx="1.8" ry="1.1" fill="#263a25"/>
<ellipse cx="324.3" cy="409.8" rx="2.2" ry="1.3" fill="#344d2f"/>
<ellipse cx="322.3" cy="412.4" rx="2.4" ry="1.4" fill="#1c2b1b"/>
<ellipse cx="324.0" cy="414.0" rx="6.0" ry="3.2" fill="#2b4229" transform="rotate(0 324.0 414.0)"/>
<ellipse cx="321.5" cy="415.0" rx="1.2" ry="0.7" fill="#2b4229"/>
<ellipse cx="326.4" cy="411.1" rx="2.0" ry="1.2" fill="#3a5534"/>
<ellipse cx="318.6" cy="415.1" rx="2.2" ry="1.3" fill="#3a5534"/>
<ellipse cx="324.1" cy="414.1" rx="1.3" ry="0.7" fill="#344d2f"/>
<ellipse cx="321.6" cy="414.9" rx="1.3" ry="0.7" fill="#1c2b1b"/>
<ellipse cx="327.7" cy="415.6" rx="2.1" ry="1.2" fill="#263a25"/>
<ellipse cx="325.7" cy="415.2" rx="2.0" ry="1.2" fill="#263a25"/>
<ellipse cx="321.7" cy="412.2" rx="2.0" ry="1.2" fill="#3a5534"/>
<ellipse cx="322.8" cy="415.7" rx="1.2" ry="0.7" fill="#1c2b1b"/>
<ellipse cx="323.9" cy="413.7" rx="2.4" ry="1.4" fill="#2b4229"/>
<ellipse cx="325.4" cy="413.5" rx="2.1" ry="1.2" fill="#3a5534"/>
<ellipse cx="324.3" cy="415.1" rx="1.5" ry="0.9" fill="#344d2f"/>
<ellipse cx="328.0" cy="416.2" rx="2.5" ry="1.4" fill="#2b4229"/>
<ellipse cx="323.3" cy="412.3" rx="2.0" ry="1.1" fill="#344d2f"/>
<ellipse cx="321.7" cy="411.0" rx="2.6" ry="1.5" fill="#45623c"/>
<ellipse cx="320.3" cy="411.4" rx="1.5" ry="0.9" fill="#3a5534"/>
<ellipse cx="327.0" cy="414.2" rx="1.5" ry="0.9" fill="#2b4229"/>
<ellipse cx="324.7" cy="415.3" rx="2.5" ry="1.4" fill="#263a25"/>
<ellipse cx="326.5" cy="412.7" rx="1.5" ry="0.9" fill="#2f472b"/>
<ellipse cx="329.2" cy="412.4" rx="2.4" ry="1.4" fill="#3a5534"/>
<ellipse cx="318.6" cy="414.6" rx="2.2" ry="1.3" fill="#1c2b1b"/>
<ellipse cx="329.8" cy="414.6" rx="1.5" ry="0.9" fill="#2f472b"/>
<ellipse cx="324.9" cy="411.9" rx="2.0" ry="1.2" fill="#3a5534"/>
<ellipse cx="325.9" cy="413.3" rx="1.2" ry="0.7" fill="#344d2f"/>
<ellipse cx="322.3" cy="413.1" rx="2.6" ry="1.5" fill="#2b4229"/>
<ellipse cx="338.9" cy="414.1" rx="6.9" ry="2.4" fill="#20321f" transform="rotate(14 338.9 414.1)"/>
<ellipse cx="341.4" cy="414.8" rx="2.1" ry="1.2" fill="#344d2f"/>
<ellipse cx="337.6" cy="411.6" rx="1.3" ry="0.7" fill="#3a5534"/>
<ellipse cx="339.4" cy="413.0" rx="2.5" ry="1.5" fill="#3a5534"/>
<ellipse cx="340.4" cy="414.0" rx="2.4" ry="1.4" fill="#2b4229"/>
<ellipse cx="341.1" cy="414.3" rx="1.5" ry="0.8" fill="#344d2f"/>
<ellipse cx="345.2" cy="416.2" rx="2.5" ry="1.4" fill="#20321f"/>
<ellipse cx="341.8" cy="412.9" rx="1.6" ry="0.9" fill="#4c6a42"/>
<ellipse cx="342.6" cy="416.7" rx="2.1" ry="1.2" fill="#2b4229"/>
<ellipse cx="336.7" cy="415.0" rx="1.2" ry="0.7" fill="#2b4229"/>
<ellipse cx="340.3" cy="414.2" rx="2.3" ry="1.3" fill="#2f472b"/>
<ellipse cx="340.0" cy="412.3" rx="1.9" ry="1.1" fill="#45623c"/>
<ellipse cx="338.1" cy="413.5" rx="1.8" ry="1.0" fill="#20321f"/>
<ellipse cx="336.9" cy="413.4" rx="1.8" ry="1.1" fill="#344d2f"/>
<ellipse cx="336.0" cy="413.0" rx="2.4" ry="1.4" fill="#4c6a42"/>
<ellipse cx="335.9" cy="412.7" rx="1.8" ry="1.0" fill="#3a5534"/>
<ellipse cx="340.2" cy="416.5" rx="2.6" ry="1.5" fill="#20321f"/>
<ellipse cx="337.6" cy="414.4" rx="2.2" ry="1.2" fill="#1c2b1b"/>
<ellipse cx="340.5" cy="416.1" rx="1.7" ry="1.0" fill="#2b4229"/>
<ellipse cx="336.7" cy="413.0" rx="2.3" ry="1.3" fill="#2f472b"/>
<ellipse cx="339.0" cy="415.1" rx="2.5" ry="1.4" fill="#20321f"/>
<ellipse cx="332.2" cy="412.5" rx="2.0" ry="1.1" fill="#4c6a42"/>
<ellipse cx="336.4" cy="412.3" rx="1.7" ry="1.0" fill="#344d2f"/>
<ellipse cx="340.0" cy="422.6" rx="10.2" ry="3.2" fill="#20321f" transform="rotate(14 340.0 422.6)"/>
<ellipse cx="332.8" cy="422.1" rx="1.7" ry="1.0" fill="#2f472b"/>
<ellipse cx="338.5" cy="425.5" rx="1.9" ry="1.1" fill="#1c2b1b"/>
<ellipse cx="347.9" cy="424.2" rx="2.5" ry="1.5" fill="#263a25"/>
<ellipse cx="331.8" cy="419.9" rx="2.2" ry="1.3" fill="#2f472b"/>
<ellipse cx="347.3" cy="425.0" rx="1.9" ry="1.1" fill="#1c2b1b"/>
<ellipse cx="336.2" cy="419.1" rx="1.4" ry="0.8" fill="#344d2f"/>
<ellipse cx="338.6" cy="420.6" rx="1.5" ry="0.9" fill="#45623c"/>
<ellipse cx="330.9" cy="421.1" rx="1.5" ry="0.9" fill="#57754c"/>
<ellipse cx="338.4" cy="425.2" rx="2.4" ry="1.4" fill="#263a25"/>
<ellipse cx="339.2" cy="419.0" rx="2.2" ry="1.3" fill="#3a5534"/>
<ellipse cx="336.2" cy="421.4" rx="1.6" ry="0.9" fill="#57754c"/>
<ellipse cx="338.7" cy="425.7" rx="2.6" ry="1.5" fill="#263a25"/>
<ellipse cx="343.2" cy="423.1" rx="1.7" ry="1.0" fill="#3a5534"/>
<ellipse cx="343.1" cy="420.5" rx="1.8" ry="1.0" fill="#57754c"/>
<ellipse cx="346.8" cy="426.4" rx="1.6" ry="0.9" fill="#1c2b1b"/>
<ellipse cx="339.0" cy="422.4" rx="2.4" ry="1.4" fill="#20321f"/>
<ellipse cx="338.2" cy="419.8" rx="2.1" ry="1.2" fill="#344d2f"/>
<ellipse cx="344.9" cy="424.1" rx="2.2" ry="1.3" fill="#20321f"/>
<ellipse cx="340.3" cy="419.3" rx="1.8" ry="1.0" fill="#3a5534"/>
<ellipse cx="333.6" cy="419.5" rx="2.4" ry="1.4" fill="#2f472b"/>
<ellipse cx="339.2" cy="419.2" rx="2.3" ry="1.3" fill="#2f472b"/>
<ellipse cx="336.2" cy="420.8" rx="1.4" ry="0.8" fill="#4c6a42"/>
<ellipse cx="334.6" cy="421.8" rx="2.1" ry="1.2" fill="#344d2f"/>
<ellipse cx="344.1" cy="422.6" rx="1.7" ry="1.0" fill="#2b4229"/>
<ellipse cx="337.0" cy="420.6" rx="1.8" ry="1.0" fill="#344d2f"/>
<ellipse cx="349.0" cy="425.2" rx="1.9" ry="1.1" fill="#263a25"/>
<ellipse cx="344.8" cy="422.5" rx="1.2" ry="0.7" fill="#1c2b1b"/>
<ellipse cx="330.3" cy="420.4" rx="1.2" ry="0.7" fill="#3a5534"/>
<ellipse cx="341.0" cy="425.8" rx="2.5" ry="1.5" fill="#263a25"/>
<ellipse cx="337.0" cy="421.7" rx="2.0" ry="1.1" fill="#263a25"/>
<ellipse cx="341.4" cy="425.3" rx="1.2" ry="0.7" fill="#2b4229"/>
<ellipse cx="333.9" cy="420.8" rx="2.5" ry="1.5" fill="#57754c"/>
<ellipse cx="344.3" cy="423.6" rx="1.9" ry="1.1" fill="#344d2f"/>
<ellipse cx="339.7" cy="419.8" rx="2.1" ry="1.2" fill="#45623c"/>
<ellipse cx="338.6" cy="424.4" rx="1.2" ry="0.7" fill="#1c2b1b"/>
<ellipse cx="347.1" cy="423.0" rx="2.1" ry="1.2" fill="#263a25"/>
<ellipse cx="339.2" cy="424.0" rx="2.2" ry="1.3" fill="#263a25"/>
<ellipse cx="349.7" cy="424.9" rx="1.8" ry="1.1" fill="#263a25"/>
<ellipse cx="345.5" cy="426.2" rx="2.3" ry="1.3" fill="#263a25"/>
<ellipse cx="332.7" cy="421.3" rx="1.5" ry="0.9" fill="#57754c"/>
<ellipse cx="310.4" cy="425.9" rx="9.9" ry="2.8" fill="#2b4229" transform="rotate(-14 310.4 425.9)"/>
<ellipse cx="305.4" cy="424.7" rx="2.3" ry="1.3" fill="#344d2f"/>
<ellipse cx="305.4" cy="427.4" rx="2.0" ry="1.1" fill="#263a25"/>
<ellipse cx="311.1" cy="423.6" rx="2.3" ry="1.3" fill="#57754c"/>
<ellipse cx="310.2" cy="427.7" rx="1.5" ry="0.9" fill="#1c2b1b"/>
<ellipse cx="307.1" cy="424.8" rx="2.3" ry="1.3" fill="#45623c"/>
<ellipse cx="306.0" cy="428.9" rx="1.6" ry="0.9" fill="#1c2b1b"/>
<ellipse cx="303.7" cy="428.6" rx="2.1" ry="1.2" fill="#2b4229"/>
<ellipse cx="313.8" cy="426.4" rx="1.7" ry="1.0" fill="#344d2f"/>
<ellipse cx="314.1" cy="422.4" rx="2.3" ry="1.3" fill="#57754c"/>
<ellipse cx="304.8" cy="426.9" rx="2.0" ry="1.2" fill="#20321f"/>
<ellipse cx="311.2" cy="426.4" rx="1.6" ry="0.9" fill="#263a25"/>
<ellipse cx="313.5" cy="425.8" rx="1.5" ry="0.9" fill="#1c2b1b"/>
<ellipse cx="302.5" cy="428.6" rx="1.5" ry="0.8" fill="#1c2b1b"/>
<ellipse cx="311.1" cy="424.5" rx="2.4" ry="1.4" fill="#3a5534"/>
<ellipse cx="313.2" cy="425.0" rx="2.5" ry="1.4" fill="#263a25"/>
<ellipse cx="311.9" cy="422.8" rx="1.5" ry="0.8" fill="#2f472b"/>
<ellipse cx="311.2" cy="426.5" rx="2.4" ry="1.4" fill="#2b4229"/>
<ellipse cx="315.3" cy="423.1" rx="1.5" ry="0.9" fill="#57754c"/>
<ellipse cx="313.0" cy="423.4" rx="2.0" ry="1.1" fill="#344d2f"/>
<ellipse cx="306.9" cy="427.0" rx="1.9" ry="1.1" fill="#1c2b1b"/>
<ellipse cx="314.7" cy="426.8" rx="2.2" ry="1.3" fill="#3a5534"/>
<ellipse cx="313.5" cy="423.3" rx="2.0" ry="1.1" fill="#2f472b"/>
<ellipse cx="309.0" cy="428.2" rx="1.8" ry="1.0" fill="#20321f"/>
<ellipse cx="313.2" cy="426.8" rx="2.1" ry="1.2" fill="#344d2f"/>
<ellipse cx="303.9" cy="425.9" rx="2.5" ry="1.4" fill="#2f472b"/>
<ellipse cx="311.3" cy="424.8" rx="1.9" ry="1.1" fill="#57754c"/>
<ellipse cx="318.5" cy="424.4" rx="2.1" ry="1.2" fill="#45623c"/>
<ellipse cx="317.2" cy="425.5" rx="1.7" ry="1.0" fill="#1c2b1b"/>
<ellipse cx="302.0" cy="427.5" rx="1.5" ry="0.8" fill="#1c2b1b"/>
<ellipse cx="308.1" cy="427.7" rx="1.2" ry="0.7" fill="#2b4229"/>
<ellipse cx="308.7" cy="428.9" rx="1.7" ry="1.0" fill="#2b4229"/>
<ellipse cx="314.0" cy="423.7" rx="1.5" ry="0.8" fill="#344d2f"/>
<ellipse cx="311.4" cy="423.9" rx="1.6" ry="0.9" fill="#45623c"/>
<ellipse cx="317.5" cy="426.2" rx="1.3" ry="0.7" fill="#344d2f"/>
<ellipse cx="316.5" cy="421.5" rx="6.5" ry="2.0" fill="#1c2b1b" transform="rotate(-14 316.5 421.5)"/>
<ellipse cx="315.0" cy="419.8" rx="1.9" ry="1.1" fill="#4c6a42"/>
<ellipse cx="314.9" cy="422.3" rx="1.2" ry="0.7" fill="#1c2b1b"/>
<ellipse cx="312.3" cy="421.4" rx="2.3" ry="1.3" fill="#263a25"/>
<ellipse cx="312.5" cy="421.4" rx="2.1" ry="1.2" fill="#2b4229"/>
<ellipse cx="313.8" cy="420.3" rx="1.3" ry="0.7" fill="#4c6a42"/>
<ellipse cx="314.1" cy="420.8" rx="2.3" ry="1.3" fill="#4c6a42"/>
<ellipse cx="313.1" cy="420.6" rx="1.8" ry="1.0" fill="#4c6a42"/>
<ellipse cx="320.7" cy="419.5" rx="1.7" ry="1.0" fill="#57754c"/>
<ellipse cx="317.2" cy="419.7" rx="1.5" ry="0.9" fill="#45623c"/>
<ellipse cx="317.1" cy="421.7" rx="1.2" ry="0.7" fill="#263a25"/>
<ellipse cx="312.3" cy="420.9" rx="1.2" ry="0.7" fill="#263a25"/>
<ellipse cx="310.8" cy="422.7" rx="2.3" ry="1.3" fill="#1c2b1b"/>
<ellipse cx="310.9" cy="421.9" rx="1.8" ry="1.0" fill="#344d2f"/>
<ellipse cx="314.1" cy="420.6" rx="2.6" ry="1.5" fill="#2f472b"/>
<ellipse cx="320.8" cy="420.3" rx="1.8" ry="1.0" fill="#4c6a42"/>
<ellipse cx="320.4" cy="421.3" rx="2.5" ry="1.4" fill="#2b4229"/>
<ellipse cx="316.9" cy="421.4" rx="2.1" ry="1.2" fill="#344d2f"/>
<ellipse cx="322.3" cy="419.9" rx="1.5" ry="0.9" fill="#4c6a42"/>
<ellipse cx="331.0" cy="431.9" rx="10.7" ry="3.0" fill="#263a25" transform="rotate(14 331.0 431.9)"/>
<ellipse cx="325.5" cy="430.9" rx="2.0" ry="1.1" fill="#344d2f"/>
<ellipse cx="330.8" cy="430.5" rx="1.2" ry="0.7" fill="#2f472b"/>
<ellipse cx="329.5" cy="428.6" rx="2.2" ry="1.3" fill="#4c6a42"/>
<ellipse cx="328.3" cy="433.7" rx="1.9" ry="1.1" fill="#2b4229"/>
<ellipse cx="333.1" cy="432.1" rx="1.2" ry="0.7" fill="#344d2f"/>
<ellipse cx="339.2" cy="434.2" rx="2.3" ry="1.3" fill="#20321f"/>
<ellipse cx="326.2" cy="432.0" rx="2.0" ry="1.2" fill="#1c2b1b"/>
<ellipse cx="335.6" cy="430.9" rx="1.6" ry="0.9" fill="#3a5534"/>
<ellipse cx="330.5" cy="429.6" rx="1.4" ry="0.8" fill="#4c6a42"/>
<ellipse cx="325.1" cy="432.5" rx="2.1" ry="1.2" fill="#20321f"/>
<ellipse cx="321.8" cy="430.1" rx="1.8" ry="1.0" fill="#45623c"/>
<ellipse cx="333.2" cy="430.1" rx="1.6" ry="0.9" fill="#4c6a42"/>
<ellipse cx="325.4" cy="428.7" rx="2.3" ry="1.3" fill="#3a5534"/>
<ellipse cx="326.5" cy="433.1" rx="2.6" ry="1.5" fill="#1c2b1b"/>
<ellipse cx="335.9" cy="435.6" rx="2.0" ry="1.2" fill="#263a25"/>
<ellipse cx="324.4" cy="432.2" rx="2.0" ry="1.2" fill="#3a5534"/>
<ellipse cx="333.3" cy="430.9" rx="1.2" ry="0.7" fill="#45623c"/>
<ellipse cx="330.2" cy="433.1" rx="2.5" ry="1.4" fill="#1c2b1b"/>
<ellipse cx="332.7" cy="431.9" rx="2.4" ry="1.4" fill="#1c2b1b"/>
<ellipse cx="339.4" cy="432.0" rx="1.4" ry="0.8" fill="#1c2b1b"/>
<ellipse cx="333.7" cy="430.3" rx="2.3" ry="1.3" fill="#344d2f"/>
<ellipse cx="329.0" cy="432.3" rx="2.0" ry="1.1" fill="#1c2b1b"/>
<ellipse cx="323.7" cy="432.1" rx="2.2" ry="1.3" fill="#3a5534"/>
<ellipse cx="329.9" cy="432.4" rx="1.7" ry="1.0" fill="#2b4229"/>
<ellipse cx="332.0" cy="433.8" rx="2.2" ry="1.3" fill="#1c2b1b"/>
<ellipse cx="327.9" cy="431.4" rx="2.3" ry="1.3" fill="#1c2b1b"/>
<ellipse cx="336.8" cy="434.2" rx="1.9" ry="1.1" fill="#2b4229"/>
<ellipse cx="336.9" cy="431.9" rx="1.9" ry="1.1" fill="#263a25"/>
<ellipse cx="332.0" cy="433.7" rx="1.3" ry="0.8" fill="#2b4229"/>
<ellipse cx="325.5" cy="432.5" rx="1.7" ry="1.0" fill="#263a25"/>
<ellipse cx="334.4" cy="431.5" rx="2.5" ry="1.4" fill="#20321f"/>
<ellipse cx="328.4" cy="432.1" rx="2.1" ry="1.2" fill="#1c2b1b"/>
<ellipse cx="335.8" cy="434.1" rx="1.2" ry="0.7" fill="#2b4229"/>
<ellipse cx="329.5" cy="431.5" rx="1.2" ry="0.7" fill="#1c2b1b"/>
<ellipse cx="336.2" cy="431.5" rx="2.0" ry="1.1" fill="#2f472b"/>
<ellipse cx="336.0" cy="432.4" rx="1.3" ry="0.8" fill="#20321f"/>
<ellipse cx="332.7" cy="429.4" rx="2.5" ry="1.5" fill="#45623c"/>
<ellipse cx="334.7" cy="431.3" rx="2.6" ry="1.5" fill="#20321f"/>
<ellipse cx="332.9" cy="432.8" rx="2.0" ry="1.1" fill="#1c2b1b"/>
<ellipse cx="312.5" cy="438.9" rx="8.8" ry="2.2" fill="#1c2b1b" transform="rotate(-14 312.5 438.9)"/>
<ellipse cx="304.7" cy="441.0" rx="2.4" ry="1.4" fill="#1c2b1b"/>
<ellipse cx="318.6" cy="436.4" rx="1.3" ry="0.7" fill="#45623c"/>
<ellipse cx="306.0" cy="439.8" rx="2.5" ry="1.5" fill="#1c2b1b"/>
<ellipse cx="316.2" cy="440.0" rx="1.7" ry="1.0" fill="#263a25"/>
<ellipse cx="316.5" cy="437.8" rx="1.2" ry="0.7" fill="#45623c"/>
<ellipse cx="314.4" cy="438.2" rx="2.0" ry="1.1" fill="#4c6a42"/>
<ellipse cx="313.4" cy="438.2" rx="2.3" ry="1.3" fill="#2b4229"/>
<ellipse cx="311.5" cy="437.1" rx="1.9" ry="1.1" fill="#4c6a42"/>
<ellipse cx="317.4" cy="439.3" rx="2.5" ry="1.4" fill="#2b4229"/>
<ellipse cx="312.0" cy="437.2" rx="1.8" ry="1.0" fill="#2f472b"/>
<ellipse cx="316.5" cy="438.7" rx="1.5" ry="0.9" fill="#344d2f"/>
<ellipse cx="309.0" cy="440.8" rx="1.8" ry="1.0" fill="#263a25"/>
<ellipse cx="319.2" cy="436.1" rx="1.8" ry="1.1" fill="#57754c"/>
<ellipse cx="313.3" cy="437.8" rx="2.4" ry="1.4" fill="#4c6a42"/>
<ellipse cx="319.6" cy="436.3" rx="2.4" ry="1.4" fill="#57754c"/>
<ellipse cx="313.4" cy="436.4" rx="2.5" ry="1.4" fill="#344d2f"/>
<ellipse cx="315.8" cy="436.5" rx="1.8" ry="1.0" fill="#45623c"/>
<ellipse cx="310.9" cy="440.3" rx="1.3" ry="0.8" fill="#2b4229"/>
<ellipse cx="315.2" cy="439.1" rx="1.3" ry="0.7" fill="#2b4229"/>
<ellipse cx="305.0" cy="441.4" rx="1.8" ry="1.0" fill="#263a25"/>
<ellipse cx="312.3" cy="440.5" rx="1.4" ry="0.8" fill="#2b4229"/>
<ellipse cx="308.2" cy="439.4" rx="2.3" ry="1.3" fill="#2f472b"/>
<ellipse cx="307.7" cy="440.2" rx="2.5" ry="1.4" fill="#20321f"/>
<ellipse cx="316.3" cy="439.3" rx="2.1" ry="1.2" fill="#1c2b1b"/>
<ellipse cx="310.4" cy="438.5" rx="1.9" ry="1.1" fill="#2f472b"/>
<ellipse cx="338.9" cy="442.4" rx="11.2" ry="3.6" fill="#20321f" transform="rotate(14 338.9 442.4)"/>
<ellipse cx="338.3" cy="444.0" rx="1.7" ry="1.0" fill="#2b4229"/>
<ellipse cx="349.5" cy="444.9" rx="1.3" ry="0.8" fill="#2b4229"/>
<ellipse cx="335.0" cy="442.2" rx="2.4" ry="1.4" fill="#2f472b"/>
<ellipse cx="343.7" cy="446.1" rx="1.8" ry="1.0" fill="#2b4229"/>
<ellipse cx="331.7" cy="440.4" rx="2.3" ry="1.3" fill="#3a5534"/>
<ellipse cx="336.9" cy="444.2" rx="1.2" ry="0.7" fill="#1c2b1b"/>
<ellipse cx="339.9" cy="445.5" rx="1.4" ry="0.8" fill="#263a25"/>
<ellipse cx="333.8" cy="440.8" rx="1.4" ry="0.8" fill="#3a5534"/>
<ellipse cx="341.7" cy="443.6" rx="2.0" ry="1.2" fill="#20321f"/>
<ellipse cx="339.7" cy="440.9" rx="1.4" ry="0.8" fill="#2f472b"/>
<ellipse cx="337.2" cy="438.4" rx="2.0" ry="1.2" fill="#57754c"/>
<ellipse cx="348.0" cy="444.8" rx="1.9" ry="1.1" fill="#20321f"/>
<ellipse cx="332.6" cy="440.5" rx="1.6" ry="0.9" fill="#2f472b"/>
<ellipse cx="344.5" cy="441.6" rx="1.2" ry="0.7" fill="#1c2b1b"/>
<ellipse cx="328.7" cy="440.3" rx="1.6" ry="0.9" fill="#57754c"/>
<ellipse cx="329.3" cy="438.4" rx="1.2" ry="0.7" fill="#2f472b"/>
<ellipse cx="332.6" cy="443.0" rx="1.2" ry="0.7" fill="#263a25"/>
<ellipse cx="349.1" cy="443.3" rx="1.3" ry="0.7" fill="#2f472b"/>
<ellipse cx="337.6" cy="438.5" rx="2.4" ry="1.4" fill="#45623c"/>
<ellipse cx="341.7" cy="439.4" rx="2.0" ry="1.2" fill="#4c6a42"/>
<ellipse cx="337.7" cy="443.3" rx="2.2" ry="1.3" fill="#20321f"/>
<ellipse cx="331.1" cy="440.1" rx="1.9" ry="1.1" fill="#4c6a42"/>
<ellipse cx="338.8" cy="443.5" rx="2.1" ry="1.2" fill="#3a5534"/>
<ellipse cx="343.0" cy="444.6" rx="2.3" ry="1.3" fill="#20321f"/>
<ellipse cx="349.3" cy="445.4" rx="2.2" ry="1.3" fill="#2b4229"/>
<ellipse cx="347.3" cy="444.8" rx="2.0" ry="1.2" fill="#263a25"/>
<ellipse cx="338.2" cy="440.9" rx="2.4" ry="1.4" fill="#2f472b"/>
<ellipse cx="341.0" cy="444.7" rx="1.8" ry="1.1" fill="#2b4229"/>
<ellipse cx="341.7" cy="443.9" rx="2.4" ry="1.4" fill="#263a25"/>
<ellipse cx="341.9" cy="441.9" rx="2.0" ry="1.1" fill="#2b4229"/>
<ellipse cx="329.9" cy="442.4" rx="1.2" ry="0.7" fill="#2b4229"/>
<ellipse cx="333.1" cy="442.6" rx="2.4" ry="1.4" fill="#263a25"/>
<ellipse cx="349.2" cy="445.8" rx="1.2" ry="0.7" fill="#2b4229"/>
<ellipse cx="335.7" cy="443.2" rx="1.6" ry="1.0" fill="#20321f"/>
<ellipse cx="344.1" cy="441.1" rx="2.6" ry="1.5" fill="#45623c"/>
<ellipse cx="343.7" cy="440.2" rx="1.2" ry="0.7" fill="#3a5534"/>
<ellipse cx="343.8" cy="446.2" rx="1.7" ry="1.0" fill="#1c2b1b"/>
<ellipse cx="338.4" cy="441.9" rx="1.3" ry="0.8" fill="#3a5534"/>
<ellipse cx="345.2" cy="445.0" rx="1.9" ry="1.1" fill="#20321f"/>
<ellipse cx="339.4" cy="445.0" rx="1.7" ry="1.0" fill="#1c2b1b"/>
<ellipse cx="333.0" cy="438.2" rx="2.4" ry="1.4" fill="#4c6a42"/>
<ellipse cx="347.3" cy="445.1" rx="1.6" ry="0.9" fill="#2b4229"/>
<ellipse cx="332.8" cy="438.2" rx="1.2" ry="0.7" fill="#4c6a42"/>
<ellipse cx="338.2" cy="445.0" rx="1.8" ry="1.0" fill="#20321f"/>
<ellipse cx="337.0" cy="444.0" rx="2.1" ry="1.2" fill="#20321f"/>
<ellipse cx="348.5" cy="446.2" rx="2.5" ry="1.4" fill="#2b4229"/>
<ellipse cx="345.8" cy="445.6" rx="2.5" ry="1.4" fill="#1c2b1b"/>
<ellipse cx="341.5" cy="444.0" rx="1.6" ry="0.9" fill="#1c2b1b"/>
<ellipse cx="334.1" cy="440.2" rx="2.2" ry="1.3" fill="#2f472b"/>
<ellipse cx="329.6" cy="439.0" rx="2.0" ry="1.2" fill="#3a5534"/>
<ellipse cx="313.4" cy="447.7" rx="10.2" ry="4.1" fill="#263a25" transform="rotate(-14 313.4 447.7)"/>
<ellipse cx="310.4" cy="446.8" rx="2.2" ry="1.3" fill="#20321f"/>
<ellipse cx="317.2" cy="445.2" rx="1.9" ry="1.1" fill="#45623c"/>
<ellipse cx="319.0" cy="446.8" rx="1.4" ry="0.8" fill="#263a25"/>
<ellipse cx="308.3" cy="451.3" rx="1.2" ry="0.7" fill="#2b4229"/>
<ellipse cx="319.3" cy="449.9" rx="1.6" ry="0.9" fill="#2b4229"/>
<ellipse cx="308.1" cy="449.1" rx="2.6" ry="1.5" fill="#2f472b"/>
<ellipse cx="314.8" cy="447.6" rx="2.0" ry="1.1" fill="#263a25"/>
<ellipse cx="317.4" cy="444.6" rx="1.3" ry="0.7" fill="#344d2f"/>
<ellipse cx="315.8" cy="444.8" rx="2.3" ry="1.3" fill="#3a5534"/>
<ellipse cx="315.9" cy="451.4" rx="2.2" ry="1.3" fill="#263a25"/>
<ellipse cx="306.8" cy="451.2" rx="1.4" ry="0.8" fill="#263a25"/>
<ellipse cx="305.9" cy="446.8" rx="2.3" ry="1.4" fill="#263a25"/>
<ellipse cx="321.4" cy="448.0" rx="2.5" ry="1.4" fill="#20321f"/>
<ellipse cx="313.3" cy="451.2" rx="2.1" ry="1.2" fill="#263a25"/>
<ellipse cx="310.8" cy="449.1" rx="1.8" ry="1.0" fill="#263a25"/>
<ellipse cx="307.0" cy="447.7" rx="2.5" ry="1.5" fill="#263a25"/>
<ellipse cx="319.5" cy="449.5" rx="1.6" ry="0.9" fill="#20321f"/>
<ellipse cx="309.0" cy="450.8" rx="1.8" ry="1.1" fill="#2b4229"/>
<ellipse cx="312.3" cy="450.6" rx="2.0" ry="1.1" fill="#1c2b1b"/>
<ellipse cx="312.8" cy="447.5" rx="2.2" ry="1.3" fill="#20321f"/>
<ellipse cx="309.8" cy="450.3" rx="1.9" ry="1.1" fill="#263a25"/>
<ellipse cx="308.0" cy="450.1" rx="1.5" ry="0.9" fill="#2b4229"/>
<ellipse cx="310.2" cy="452.2" rx="2.4" ry="1.4" fill="#2b4229"/>
<ellipse cx="315.8" cy="449.9" rx="2.5" ry="1.4" fill="#20321f"/>
<ellipse cx="318.4" cy="446.8" rx="2.5" ry="1.4" fill="#2f472b"/>
<ellipse cx="320.5" cy="444.0" rx="1.9" ry="1.1" fill="#344d2f"/>
<ellipse cx="306.2" cy="449.1" rx="2.1" ry="1.2" fill="#20321f"/>
<ellipse cx="311.5" cy="448.4" rx="2.1" ry="1.2" fill="#20321f"/>
<ellipse cx="320.7" cy="444.7" rx="1.9" ry="1.1" fill="#4c6a42"/>
<ellipse cx="307.9" cy="450.8" rx="2.1" ry="1.2" fill="#263a25"/>
<ellipse cx="319.7" cy="443.1" rx="1.9" ry="1.1" fill="#344d2f"/>
<ellipse cx="313.4" cy="443.5" rx="2.0" ry="1.2" fill="#2f472b"/>
<ellipse cx="304.4" cy="449.2" rx="1.4" ry="0.8" fill="#2f472b"/>
<ellipse cx="311.8" cy="449.0" rx="1.6" ry="0.9" fill="#3a5534"/>
<ellipse cx="321.1" cy="448.5" rx="2.2" ry="1.2" fill="#1c2b1b"/>
<ellipse cx="319.5" cy="444.9" rx="2.6" ry="1.5" fill="#2f472b"/>
<ellipse cx="316.8" cy="448.9" rx="1.9" ry="1.1" fill="#263a25"/>
<ellipse cx="317.9" cy="444.8" rx="1.3" ry="0.7" fill="#3a5534"/>
<ellipse cx="308.3" cy="447.4" rx="2.6" ry="1.5" fill="#2b4229"/>
<ellipse cx="311.1" cy="444.6" rx="1.2" ry="0.7" fill="#4c6a42"/>
<ellipse cx="311.3" cy="451.7" rx="1.2" ry="0.7" fill="#2b4229"/>
<ellipse cx="311.1" cy="449.1" rx="1.2" ry="0.7" fill="#344d2f"/>
<ellipse cx="316.3" cy="449.9" rx="2.0" ry="1.1" fill="#2b4229"/>
<ellipse cx="319.1" cy="443.2" rx="1.9" ry="1.1" fill="#57754c"/>
<ellipse cx="307.4" cy="447.9" rx="1.3" ry="0.8" fill="#3a5534"/>
<ellipse cx="306.3" cy="449.1" rx="1.2" ry="0.7" fill="#344d2f"/>
<ellipse cx="317.4" cy="449.5" rx="2.3" ry="1.4" fill="#1c2b1b"/>
<ellipse cx="314.0" cy="446.5" rx="1.2" ry="0.7" fill="#1c2b1b"/>
<ellipse cx="309.9" cy="447.8" rx="1.5" ry="0.9" fill="#2f472b"/>
<ellipse cx="316.3" cy="449.0" rx="1.3" ry="0.8" fill="#263a25"/>
<ellipse cx="319.0" cy="451.0" rx="7.0" ry="2.4" fill="#20321f" transform="rotate(-14 319.0 451.0)"/>
<ellipse cx="316.7" cy="453.0" rx="1.7" ry="1.0" fill="#20321f"/>
<ellipse cx="320.2" cy="452.3" rx="2.3" ry="1.3" fill="#20321f"/>
<ellipse cx="314.2" cy="453.0" rx="1.5" ry="0.9" fill="#20321f"/>
<ellipse cx="322.2" cy="451.9" rx="1.4" ry="0.8" fill="#344d2f"/>
<ellipse cx="323.6" cy="448.4" rx="1.6" ry="0.9" fill="#3a5534"/>
<ellipse cx="319.5" cy="453.3" rx="2.6" ry="1.5" fill="#20321f"/>
<ellipse cx="319.6" cy="452.5" rx="2.2" ry="1.3" fill="#263a25"/>
<ellipse cx="315.5" cy="452.7" rx="2.2" ry="1.3" fill="#20321f"/>
<ellipse cx="319.6" cy="449.6" rx="1.4" ry="0.8" fill="#45623c"/>
<ellipse cx="318.6" cy="451.3" rx="2.4" ry="1.4" fill="#20321f"/>
<ellipse cx="316.8" cy="451.2" rx="1.9" ry="1.1" fill="#20321f"/>
<ellipse cx="316.6" cy="453.4" rx="2.5" ry="1.5" fill="#1c2b1b"/>
<ellipse cx="320.5" cy="449.2" rx="1.5" ry="0.9" fill="#57754c"/>
<ellipse cx="315.2" cy="452.3" rx="1.8" ry="1.0" fill="#2b4229"/>
<ellipse cx="316.7" cy="450.3" rx="1.4" ry="0.8" fill="#2b4229"/>
<ellipse cx="321.3" cy="451.3" rx="1.9" ry="1.1" fill="#1c2b1b"/>
<ellipse cx="322.4" cy="451.4" rx="2.4" ry="1.4" fill="#1c2b1b"/>
<ellipse cx="319.6" cy="452.4" rx="1.5" ry="0.9" fill="#1c2b1b"/>
<ellipse cx="314.7" cy="453.9" rx="1.5" ry="0.8" fill="#1c2b1b"/>
<ellipse cx="315.8" cy="451.8" rx="1.8" ry="1.0" fill="#3a5534"/>
<ellipse cx="325.1" cy="448.5" rx="2.0" ry="1.2" fill="#344d2f"/>
<ellipse cx="315.3" cy="451.1" rx="1.5" ry="0.9" fill="#263a25"/>
<ellipse cx="337.1" cy="455.7" rx="10.4" ry="3.2" fill="#263a25" transform="rotate(14 337.1 455.7)"/>
<ellipse cx="342.8" cy="459.3" rx="2.1" ry="1.2" fill="#20321f"/>
<ellipse cx="332.2" cy="454.0" rx="2.3" ry="1.3" fill="#344d2f"/>
<ellipse cx="345.4" cy="458.3" rx="1.4" ry="0.8" fill="#20321f"/>
<ellipse cx="334.7" cy="455.7" rx="1.4" ry="0.8" fill="#1c2b1b"/>
<ellipse cx="337.3" cy="457.2" rx="2.4" ry="1.4" fill="#20321f"/>
<ellipse cx="331.7" cy="453.5" rx="1.9" ry="1.1" fill="#45623c"/>
<ellipse cx="339.5" cy="459.1" rx="1.3" ry="0.7" fill="#2b4229"/>
<ellipse cx="342.6" cy="459.2" rx="1.6" ry="0.9" fill="#1c2b1b"/>
<ellipse cx="341.4" cy="454.8" rx="2.1" ry="1.2" fill="#2b4229"/>
<ellipse cx="339.7" cy="455.4" rx="1.6" ry="0.9" fill="#344d2f"/>
<ellipse cx="330.5" cy="456.4" rx="2.2" ry="1.2" fill="#20321f"/>
<ellipse cx="345.4" cy="458.2" rx="1.8" ry="1.1" fill="#1c2b1b"/>
<ellipse cx="331.8" cy="456.6" rx="1.4" ry="0.8" fill="#344d2f"/>
<ellipse cx="335.4" cy="458.0" rx="1.5" ry="0.9" fill="#20321f"/>
<ellipse cx="330.2" cy="455.5" rx="1.8" ry="1.0" fill="#1c2b1b"/>
<ellipse cx="334.6" cy="457.1" rx="1.2" ry="0.7" fill="#2b4229"/>
<ellipse cx="331.0" cy="451.7" rx="2.0" ry="1.1" fill="#57754c"/>
<ellipse cx="329.7" cy="452.6" rx="1.5" ry="0.9" fill="#344d2f"/>
<ellipse cx="334.0" cy="452.6" rx="2.5" ry="1.4" fill="#4c6a42"/>
<ellipse cx="342.2" cy="454.3" rx="1.6" ry="0.9" fill="#4c6a42"/>
<ellipse cx="343.0" cy="455.3" rx="2.2" ry="1.2" fill="#3a5534"/>
<ellipse cx="336.4" cy="454.9" rx="1.6" ry="0.9" fill="#1c2b1b"/>
<ellipse cx="345.0" cy="456.1" rx="1.3" ry="0.7" fill="#2b4229"/>
<ellipse cx="337.5" cy="452.3" rx="2.0" ry="1.2" fill="#57754c"/>
<ellipse cx="336.3" cy="456.5" rx="2.5" ry="1.5" fill="#20321f"/>
<ellipse cx="331.4" cy="455.0" rx="1.9" ry="1.1" fill="#2b4229"/>
<ellipse cx="341.5" cy="454.4" rx="1.8" ry="1.0" fill="#4c6a42"/>
<ellipse cx="335.4" cy="453.9" rx="2.1" ry="1.2" fill="#57754c"/>
<ellipse cx="332.7" cy="454.7" rx="2.5" ry="1.5" fill="#1c2b1b"/>
<ellipse cx="339.3" cy="454.6" rx="2.0" ry="1.1" fill="#2f472b"/>
<ellipse cx="337.1" cy="457.5" rx="2.5" ry="1.5" fill="#263a25"/>
<ellipse cx="332.6" cy="456.3" rx="1.5" ry="0.8" fill="#2f472b"/>
<ellipse cx="342.0" cy="459.1" rx="1.9" ry="1.1" fill="#1c2b1b"/>
<ellipse cx="337.1" cy="457.4" rx="1.9" ry="1.1" fill="#1c2b1b"/>
<ellipse cx="342.0" cy="459.0" rx="2.2" ry="1.3" fill="#263a25"/>
<ellipse cx="340.2" cy="455.6" rx="2.0" ry="1.1" fill="#2f472b"/>
<ellipse cx="334.9" cy="454.3" rx="1.8" ry="1.0" fill="#57754c"/>
<ellipse cx="335.6" cy="454.1" rx="2.6" ry="1.5" fill="#344d2f"/>
<ellipse cx="339.0" cy="455.1" rx="1.6" ry="0.9" fill="#2f472b"/>
<ellipse cx="335.0" cy="455.2" rx="2.5" ry="1.4" fill="#2f472b"/>
<ellipse cx="339.2" cy="459.0" rx="1.8" ry="1.0" fill="#20321f"/>
<ellipse cx="310.4" cy="458.1" rx="6.7" ry="2.1" fill="#263a25" transform="rotate(-14 310.4 458.1)"/>
<ellipse cx="308.7" cy="460.0" rx="1.7" ry="1.0" fill="#263a25"/>
<ellipse cx="309.0" cy="458.3" rx="1.8" ry="1.1" fill="#1c2b1b"/>
<ellipse cx="304.8" cy="459.7" rx="1.6" ry="0.9" fill="#2b4229"/>
<ellipse cx="314.1" cy="458.2" rx="1.8" ry="1.0" fill="#3a5534"/>
<ellipse cx="310.8" cy="456.7" rx="1.7" ry="1.0" fill="#4c6a42"/>
<ellipse cx="306.9" cy="457.6" rx="2.5" ry="1.4" fill="#2b4229"/>
<ellipse cx="308.3" cy="456.9" rx="1.3" ry="0.7" fill="#2f472b"/>
<ellipse cx="316.0" cy="457.1" rx="2.4" ry="1.4" fill="#45623c"/>
<ellipse cx="306.5" cy="460.8" rx="1.9" ry="1.1" fill="#263a25"/>
<ellipse cx="315.0" cy="458.2" rx="1.6" ry="0.9" fill="#263a25"/>
<ellipse cx="309.3" cy="459.3" rx="2.4" ry="1.4" fill="#2b4229"/>
<ellipse cx="310.8" cy="458.9" rx="2.5" ry="1.4" fill="#1c2b1b"/>
<ellipse cx="311.7" cy="456.8" rx="1.2" ry="0.7" fill="#3a5534"/>
<ellipse cx="311.9" cy="455.7" rx="2.6" ry="1.5" fill="#344d2f"/>
<ellipse cx="315.2" cy="455.7" rx="1.9" ry="1.1" fill="#344d2f"/>
<ellipse cx="309.0" cy="456.2" rx="2.0" ry="1.2" fill="#2f472b"/>
<ellipse cx="315.3" cy="457.9" rx="1.4" ry="0.8" fill="#20321f"/>
<ellipse cx="307.4" cy="457.8" rx="2.6" ry="1.5" fill="#1c2b1b"/>
<ellipse cx="307.8" cy="459.2" rx="2.2" ry="1.3" fill="#20321f"/>
<ellipse cx="310.6" cy="462.9" rx="8.5" ry="2.6" fill="#20321f" transform="rotate(-14 310.6 462.9)"/>
<ellipse cx="314.3" cy="459.8" rx="2.3" ry="1.3" fill="#344d2f"/>
<ellipse cx="312.2" cy="463.2" rx="1.2" ry="0.7" fill="#2b4229"/>
<ellipse cx="306.6" cy="464.8" rx="1.8" ry="1.0" fill="#263a25"/>
<ellipse cx="313.3" cy="461.6" rx="1.6" ry="0.9" fill="#344d2f"/>
<ellipse cx="312.4" cy="460.3" rx="2.0" ry="1.1" fill="#344d2f"/>
<ellipse cx="314.9" cy="462.7" rx="1.8" ry="1.1" fill="#263a25"/>
<ellipse cx="316.8" cy="460.0" rx="2.6" ry="1.5" fill="#3a5534"/>
<ellipse cx="304.8" cy="462.7" rx="1.3" ry="0.7" fill="#2b4229"/>
<ellipse cx="307.8" cy="465.7" rx="2.0" ry="1.1" fill="#1c2b1b"/>
<ellipse cx="316.0" cy="461.0" rx="2.1" ry="1.2" fill="#45623c"/>
<ellipse cx="314.3" cy="460.5" rx="2.1" ry="1.2" fill="#57754c"/>
<ellipse cx="312.4" cy="464.9" rx="2.2" ry="1.2" fill="#263a25"/>
<ellipse cx="307.6" cy="462.2" rx="2.0" ry="1.2" fill="#20321f"/>
<ellipse cx="308.3" cy="464.6" rx="1.8" ry="1.0" fill="#2b4229"/>
<ellipse cx="313.5" cy="463.0" rx="2.4" ry="1.4" fill="#263a25"/>
<ellipse cx="310.3" cy="461.7" rx="2.4" ry="1.4" fill="#2f472b"/>
<ellipse cx="315.9" cy="462.8" rx="1.5" ry="0.9" fill="#20321f"/>
<ellipse cx="311.9" cy="464.5" rx="1.9" ry="1.1" fill="#20321f"/>
<ellipse cx="309.3" cy="460.6" rx="2.0" ry="1.1" fill="#344d2f"/>
<ellipse cx="306.9" cy="461.6" rx="1.4" ry="0.8" fill="#3a5534"/>
<ellipse cx="303.8" cy="463.9" rx="2.3" ry="1.3" fill="#344d2f"/>
<ellipse cx="304.5" cy="462.5" rx="1.9" ry="1.1" fill="#20321f"/>
<ellipse cx="312.8" cy="460.9" rx="1.4" ry="0.8" fill="#57754c"/>
<ellipse cx="303.7" cy="463.7" rx="1.4" ry="0.8" fill="#1c2b1b"/>
<ellipse cx="306.5" cy="462.8" rx="1.2" ry="0.7" fill="#344d2f"/>
<ellipse cx="317.1" cy="461.6" rx="1.5" ry="0.9" fill="#45623c"/>
<ellipse cx="313.0" cy="463.1" rx="2.5" ry="1.4" fill="#344d2f"/>
<ellipse cx="304.6" cy="462.6" rx="2.0" ry="1.1" fill="#2b4229"/>
<ellipse cx="312.8" cy="461.6" rx="2.2" ry="1.3" fill="#45623c"/>
<ellipse cx="334.7" cy="463.8" rx="8.0" ry="2.8" fill="#20321f" transform="rotate(14 334.7 463.8)"/>
<ellipse cx="336.2" cy="463.2" rx="1.7" ry="1.0" fill="#2b4229"/>
<ellipse cx="330.2" cy="462.3" rx="1.9" ry="1.1" fill="#3a5534"/>
<ellipse cx="331.6" cy="464.4" rx="1.6" ry="0.9" fill="#263a25"/>
<ellipse cx="339.9" cy="466.9" rx="2.1" ry="1.2" fill="#2b4229"/>
<ellipse cx="330.3" cy="464.6" rx="1.2" ry="0.7" fill="#263a25"/>
<ellipse cx="328.0" cy="463.1" rx="1.9" ry="1.1" fill="#344d2f"/>
<ellipse cx="336.0" cy="462.8" rx="2.0" ry="1.1" fill="#45623c"/>
<ellipse cx="339.6" cy="463.2" rx="2.4" ry="1.4" fill="#263a25"/>
<ellipse cx="339.1" cy="463.3" rx="2.2" ry="1.2" fill="#1c2b1b"/>
<ellipse cx="333.6" cy="465.5" rx="1.2" ry="0.7" fill="#263a25"/>
<ellipse cx="329.3" cy="462.6" rx="1.2" ry="0.7" fill="#4c6a42"/>
<ellipse cx="339.9" cy="466.1" rx="2.1" ry="1.2" fill="#1c2b1b"/>
<ellipse cx="339.5" cy="462.5" rx="2.2" ry="1.2" fill="#344d2f"/>
<ellipse cx="328.6" cy="464.0" rx="2.0" ry="1.2" fill="#344d2f"/>
<ellipse cx="330.7" cy="464.4" rx="1.6" ry="0.9" fill="#3a5534"/>
<ellipse cx="333.4" cy="463.1" rx="1.4" ry="0.8" fill="#2f472b"/>
<ellipse cx="334.5" cy="462.0" rx="1.8" ry="1.1" fill="#45623c"/>
<ellipse cx="332.6" cy="464.8" rx="1.9" ry="1.1" fill="#263a25"/>
<ellipse cx="339.9" cy="465.3" rx="2.6" ry="1.5" fill="#20321f"/>
<ellipse cx="330.6" cy="460.8" rx="1.4" ry="0.8" fill="#344d2f"/>
<ellipse cx="333.4" cy="465.5" rx="1.5" ry="0.9" fill="#263a25"/>
<ellipse cx="336.1" cy="464.1" rx="2.0" ry="1.1" fill="#1c2b1b"/>
<ellipse cx="337.4" cy="465.2" rx="1.8" ry="1.0" fill="#20321f"/>
<ellipse cx="331.7" cy="464.2" rx="2.3" ry="1.3" fill="#1c2b1b"/>
<ellipse cx="335.8" cy="462.9" rx="1.3" ry="0.7" fill="#1c2b1b"/>
<ellipse cx="331.8" cy="464.6" rx="2.4" ry="1.4" fill="#3a5534"/>
<ellipse cx="330.9" cy="464.6" rx="1.8" ry="1.0" fill="#344d2f"/>
<ellipse cx="333.5" cy="461.1" rx="2.4" ry="1.4" fill="#344d2f"/>
</g>
<!-- mountain -->
<path d="M355.6 457.7 L384.2 440.4 L409.8 426.7 L426.9 417.3 L430.3 416.1 L438.4 417.2 L448.2 412.4 L457.2 408.1 L460.2 410.5 L464.5 412.2 L473.9 414.8 L483.2 420.8 L489.7 424.3 L499.4 415.8 L509.0 411.5 L523.6 408.1 L534.2 402.8 L547.8 398.9 L551.2 395.0 L558.9 392.6 L567.1 399.4 L570.5 403.2 L581.7 409.0 L596.2 418.7 L615.5 429.4 L622.3 439.1 L639.3 450.2 L617.5 448.3 L612.6 445.8 L589.4 443.9 L601.0 439.5 L615.1 437.6 L609.7 430.3 L596.2 425.5 L581.7 419.7 L570.0 417.3 L562.3 411.9 L557.5 409.5 L556.5 411.0 L557.5 416.3 L572.0 421.1 L586.0 428.4 L559.4 427.0 L553.6 425.0 L559.4 422.1 L556.5 421.6 L547.8 418.7 L542.9 411.9 L540.0 411.5 L532.3 418.7 L523.6 425.5 L513.9 430.3 L499.4 436.2 L492.6 442.0 L488.2 448.3 L487.7 443.9 L492.6 436.2 L498.4 431.8 L513.9 425.0 L517.3 422.6 L520.7 416.3 L512.9 416.0 L507.1 419.7 L499.4 426.0 L491.6 432.8 L483.3 436.1 L469.6 443.4 L452.5 450.2 L435.4 454.5 L418.3 456.2 L397.0 457.7 L403.0 455.3 L426.9 452.4 L448.2 448.1 L459.3 443.8 L469.6 437.8 L479.8 430.6 L473.9 427.6 L467.9 424.2 L456.8 422.5 L444.0 425.9 L438.0 431.9 L434.1 436.6 L428.6 441.3 L425.2 444.2 L421.8 446.4 L421.3 442.1 L417.5 443.4 L408.1 446.4 L399.1 446.4 L409.8 441.3 L418.3 436.1 L425.6 431.0 L426.0 428.9 L422.6 429.3 L409.8 435.3 L392.7 444.7 L375.6 453.2Z" fill="#5b6a98" stroke="#16161c" stroke-width="1.55" stroke-linejoin="round"/>
<!-- text -->
<g font-family="'Liberation Serif',serif" font-size="61" fill="#3a3527" stroke="#fff" stroke-width="0.6" vector-effect="non-scaling-stroke">
<text id="lP" transform="translate(293.2 509.6) scale(0.77 1)">P</text>
<text id="lN" transform="translate(332.8 509.6) scale(0.75 1)">N</text>
<text id="lE" transform="translate(372.3 509.6) scale(0.79 1)">E</text>
<text id="lR" transform="translate(403.2 509.6) scale(0.73 1)">R</text>
<text id="lY" transform="translate(429.3 509.6) scale(0.825 1)">Y</text>
</g>
<g font-family="'Liberation Serif',serif" font-size="61" fill="#566490" stroke="#fff" stroke-width="0.8" vector-effect="non-scaling-stroke">
<text id="lS" transform="translate(480.8 509.6) scale(1.0 1)">S</text>
<text id="lO" transform="translate(513.6 509.6) scale(1.09 1)">O</text>
<text id="lU" transform="translate(563 509.6) scale(0.71 1)">U</text>
<text id="lT" transform="translate(596.1 509.6) scale(0.88 1)">T</text>
<text id="lH" transform="translate(628.6 509.6) scale(0.83 1)">H</text>
</g>
</svg>
<!-- /LOGO -->
</div>
</body>
</html>
